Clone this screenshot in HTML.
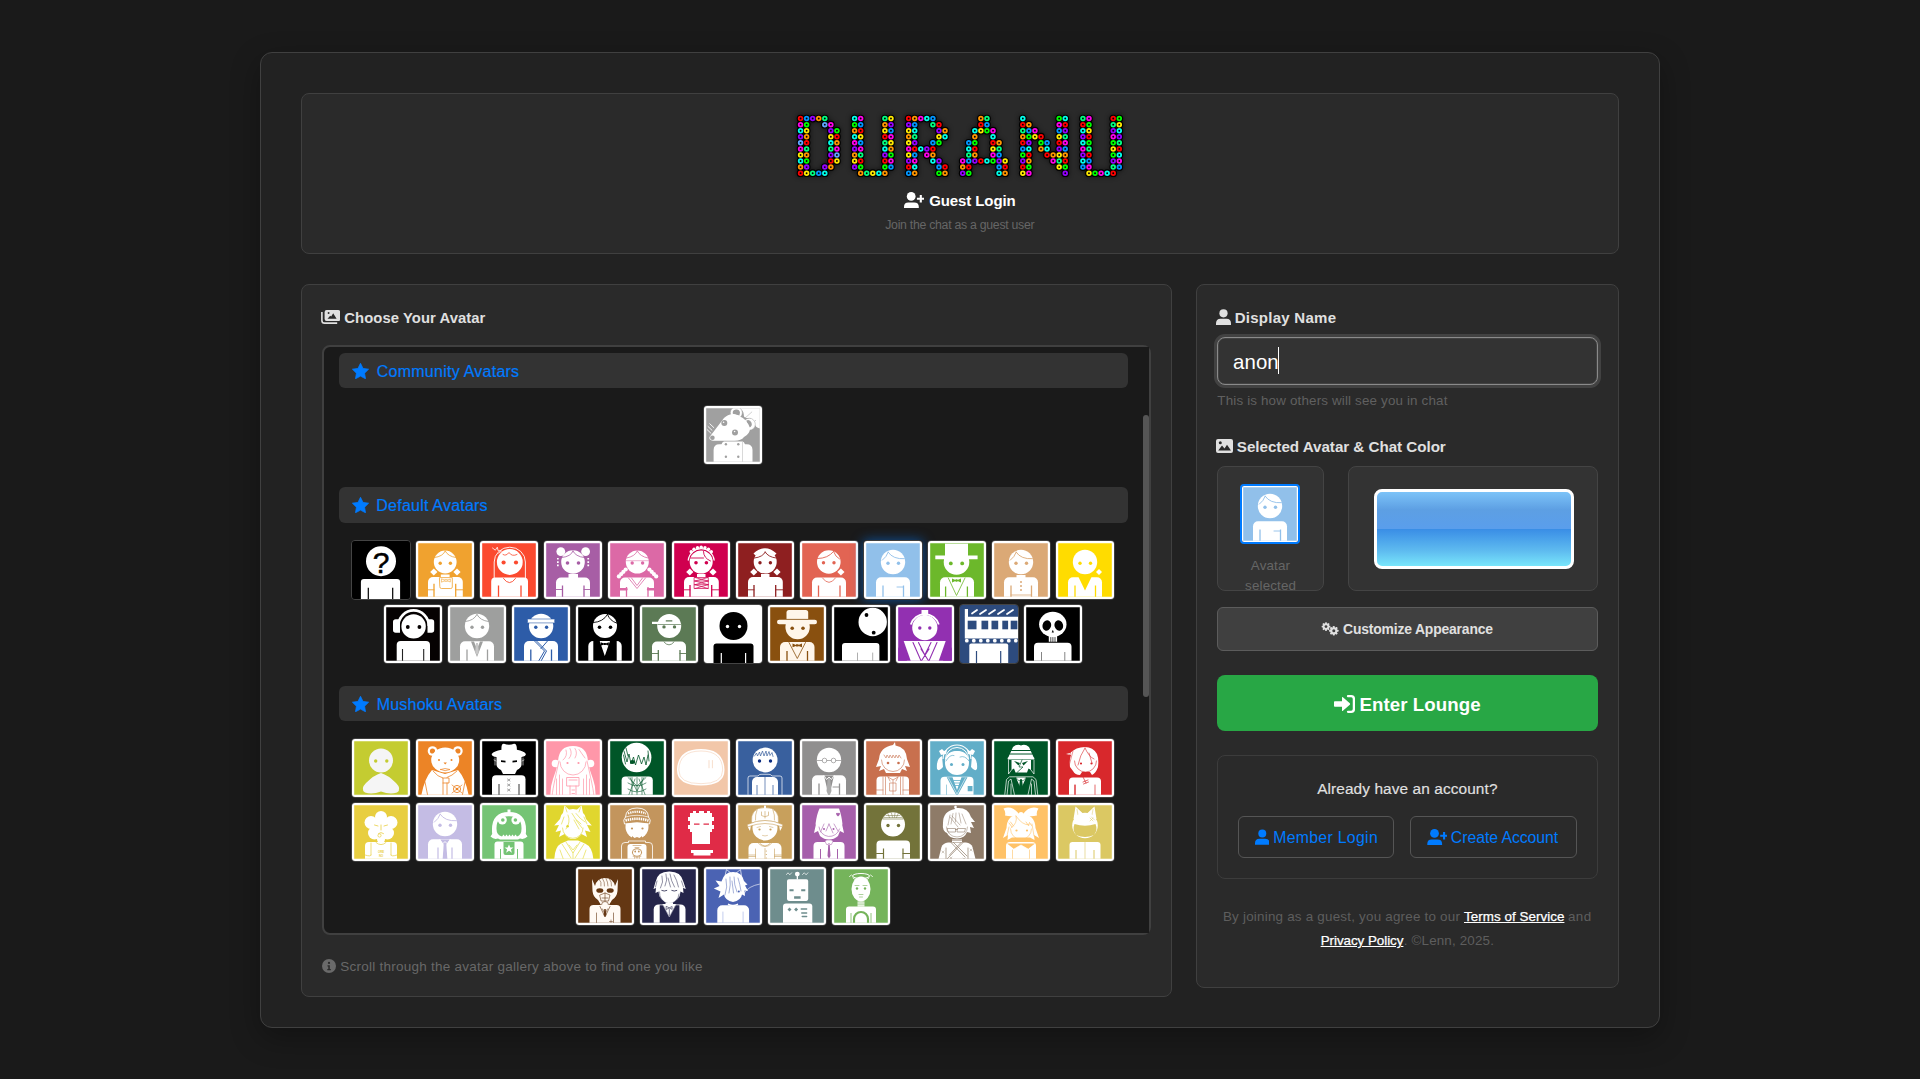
<!DOCTYPE html><html lang="en"><head><meta charset="utf-8"><title>Guest Login - Duranu</title><style>
*{box-sizing:border-box;margin:0;padding:0}
html,body{width:1920px;height:1079px;overflow:hidden;background:#1a1a1a}
body{font-family:"Liberation Sans",sans-serif;color:#e0e0e0;position:relative}
.abs{position:absolute}
button{all:unset;position:absolute;box-sizing:border-box;display:block}
#wrap{position:absolute;left:260px;top:52px;width:1400px;height:976px;background:#222;border:1px solid #404040;border-radius:12px;box-shadow:0 10px 30px rgba(0,0,0,.3)}
.card{position:absolute;background:#2a2a2a;border:1px solid #404040;border-radius:8px}
#hdr{left:301px;top:93px;width:1318px;height:161px}
#left{left:301px;top:284px;width:871px;height:713px}
#right{left:1196px;top:284px;width:423px;height:704px}
.ic{display:inline-block;vertical-align:middle}
.t{position:absolute;white-space:nowrap;line-height:1}
#gal{position:absolute;left:322px;top:345px;width:829px;height:590px;border:2px solid #404040;border-radius:8px;background:#1a1a1a;overflow:hidden}
.sec{position:absolute;left:15px;width:789px;height:35px;background:#333;border-radius:6px}
.av{position:absolute;width:60px;height:60px;border:1px solid #3e3e3e;border-radius:4px}
.av svg{display:block}
.av.dk{border-color:#444}
.av.sel{box-shadow:0 0 12px rgba(0,123,255,.55)}
</style></head><body>
<div id="wrap"></div>
<div class="card" id="hdr"></div>
<svg width="0" height="0" style="position:absolute"><defs><filter id="lg" x="-10%" y="-30%" width="120%" height="160%"><feGaussianBlur stdDeviation="2.4"/></filter><filter id="lg2" x="-10%" y="-30%" width="120%" height="160%"><feGaussianBlur stdDeviation="0.45"/></filter></defs></svg>
<div class="abs" style="left:790px;top:108px"><svg class="logo" role="img" aria-label="DURANU" width="339.85" height="75.75" viewBox="0 0 339.85 75.75"><title>DURANU</title><g fill="#000" opacity=".55" filter="url(#lg)"><circle cx="10.56" cy="10.56" r="3.9"/><circle cx="16.62" cy="10.56" r="3.9"/><circle cx="22.68" cy="10.56" r="3.9"/><circle cx="28.74" cy="10.56" r="3.9"/><circle cx="34.80" cy="10.56" r="3.9"/><circle cx="64.61" cy="10.56" r="3.9"/><circle cx="70.67" cy="10.56" r="3.9"/><circle cx="94.91" cy="10.56" r="3.9"/><circle cx="100.97" cy="10.56" r="3.9"/><circle cx="118.66" cy="10.56" r="3.9"/><circle cx="124.72" cy="10.56" r="3.9"/><circle cx="130.78" cy="10.56" r="3.9"/><circle cx="136.84" cy="10.56" r="3.9"/><circle cx="142.90" cy="10.56" r="3.9"/><circle cx="190.89" cy="10.56" r="3.9"/><circle cx="196.95" cy="10.56" r="3.9"/><circle cx="232.82" cy="10.56" r="3.9"/><circle cx="269.18" cy="10.56" r="3.9"/><circle cx="275.24" cy="10.56" r="3.9"/><circle cx="292.93" cy="10.56" r="3.9"/><circle cx="298.99" cy="10.56" r="3.9"/><circle cx="323.23" cy="10.56" r="3.9"/><circle cx="329.29" cy="10.56" r="3.9"/><circle cx="10.56" cy="16.63" r="3.9"/><circle cx="16.62" cy="16.63" r="3.9"/><circle cx="34.80" cy="16.63" r="3.9"/><circle cx="40.86" cy="16.63" r="3.9"/><circle cx="64.61" cy="16.63" r="3.9"/><circle cx="70.67" cy="16.63" r="3.9"/><circle cx="94.91" cy="16.63" r="3.9"/><circle cx="100.97" cy="16.63" r="3.9"/><circle cx="118.66" cy="16.63" r="3.9"/><circle cx="124.72" cy="16.63" r="3.9"/><circle cx="142.90" cy="16.63" r="3.9"/><circle cx="148.96" cy="16.63" r="3.9"/><circle cx="190.89" cy="16.63" r="3.9"/><circle cx="196.95" cy="16.63" r="3.9"/><circle cx="232.82" cy="16.63" r="3.9"/><circle cx="238.88" cy="16.63" r="3.9"/><circle cx="269.18" cy="16.63" r="3.9"/><circle cx="275.24" cy="16.63" r="3.9"/><circle cx="292.93" cy="16.63" r="3.9"/><circle cx="298.99" cy="16.63" r="3.9"/><circle cx="323.23" cy="16.63" r="3.9"/><circle cx="329.29" cy="16.63" r="3.9"/><circle cx="10.56" cy="22.70" r="3.9"/><circle cx="16.62" cy="22.70" r="3.9"/><circle cx="40.86" cy="22.70" r="3.9"/><circle cx="46.92" cy="22.70" r="3.9"/><circle cx="64.61" cy="22.70" r="3.9"/><circle cx="70.67" cy="22.70" r="3.9"/><circle cx="94.91" cy="22.70" r="3.9"/><circle cx="100.97" cy="22.70" r="3.9"/><circle cx="118.66" cy="22.70" r="3.9"/><circle cx="124.72" cy="22.70" r="3.9"/><circle cx="148.96" cy="22.70" r="3.9"/><circle cx="155.02" cy="22.70" r="3.9"/><circle cx="184.83" cy="22.70" r="3.9"/><circle cx="190.89" cy="22.70" r="3.9"/><circle cx="196.95" cy="22.70" r="3.9"/><circle cx="203.01" cy="22.70" r="3.9"/><circle cx="232.82" cy="22.70" r="3.9"/><circle cx="238.88" cy="22.70" r="3.9"/><circle cx="244.94" cy="22.70" r="3.9"/><circle cx="269.18" cy="22.70" r="3.9"/><circle cx="275.24" cy="22.70" r="3.9"/><circle cx="292.93" cy="22.70" r="3.9"/><circle cx="298.99" cy="22.70" r="3.9"/><circle cx="323.23" cy="22.70" r="3.9"/><circle cx="329.29" cy="22.70" r="3.9"/><circle cx="10.56" cy="28.77" r="3.9"/><circle cx="16.62" cy="28.77" r="3.9"/><circle cx="40.86" cy="28.77" r="3.9"/><circle cx="46.92" cy="28.77" r="3.9"/><circle cx="64.61" cy="28.77" r="3.9"/><circle cx="70.67" cy="28.77" r="3.9"/><circle cx="94.91" cy="28.77" r="3.9"/><circle cx="100.97" cy="28.77" r="3.9"/><circle cx="118.66" cy="28.77" r="3.9"/><circle cx="124.72" cy="28.77" r="3.9"/><circle cx="148.96" cy="28.77" r="3.9"/><circle cx="155.02" cy="28.77" r="3.9"/><circle cx="184.83" cy="28.77" r="3.9"/><circle cx="203.01" cy="28.77" r="3.9"/><circle cx="232.82" cy="28.77" r="3.9"/><circle cx="238.88" cy="28.77" r="3.9"/><circle cx="244.94" cy="28.77" r="3.9"/><circle cx="251.00" cy="28.77" r="3.9"/><circle cx="269.18" cy="28.77" r="3.9"/><circle cx="275.24" cy="28.77" r="3.9"/><circle cx="292.93" cy="28.77" r="3.9"/><circle cx="298.99" cy="28.77" r="3.9"/><circle cx="323.23" cy="28.77" r="3.9"/><circle cx="329.29" cy="28.77" r="3.9"/><circle cx="10.56" cy="34.84" r="3.9"/><circle cx="16.62" cy="34.84" r="3.9"/><circle cx="40.86" cy="34.84" r="3.9"/><circle cx="46.92" cy="34.84" r="3.9"/><circle cx="64.61" cy="34.84" r="3.9"/><circle cx="70.67" cy="34.84" r="3.9"/><circle cx="94.91" cy="34.84" r="3.9"/><circle cx="100.97" cy="34.84" r="3.9"/><circle cx="118.66" cy="34.84" r="3.9"/><circle cx="124.72" cy="34.84" r="3.9"/><circle cx="142.90" cy="34.84" r="3.9"/><circle cx="148.96" cy="34.84" r="3.9"/><circle cx="178.77" cy="34.84" r="3.9"/><circle cx="184.83" cy="34.84" r="3.9"/><circle cx="203.01" cy="34.84" r="3.9"/><circle cx="209.07" cy="34.84" r="3.9"/><circle cx="232.82" cy="34.84" r="3.9"/><circle cx="238.88" cy="34.84" r="3.9"/><circle cx="251.00" cy="34.84" r="3.9"/><circle cx="257.06" cy="34.84" r="3.9"/><circle cx="269.18" cy="34.84" r="3.9"/><circle cx="275.24" cy="34.84" r="3.9"/><circle cx="292.93" cy="34.84" r="3.9"/><circle cx="298.99" cy="34.84" r="3.9"/><circle cx="323.23" cy="34.84" r="3.9"/><circle cx="329.29" cy="34.84" r="3.9"/><circle cx="10.56" cy="40.91" r="3.9"/><circle cx="16.62" cy="40.91" r="3.9"/><circle cx="40.86" cy="40.91" r="3.9"/><circle cx="46.92" cy="40.91" r="3.9"/><circle cx="64.61" cy="40.91" r="3.9"/><circle cx="70.67" cy="40.91" r="3.9"/><circle cx="94.91" cy="40.91" r="3.9"/><circle cx="100.97" cy="40.91" r="3.9"/><circle cx="118.66" cy="40.91" r="3.9"/><circle cx="124.72" cy="40.91" r="3.9"/><circle cx="130.78" cy="40.91" r="3.9"/><circle cx="136.84" cy="40.91" r="3.9"/><circle cx="142.90" cy="40.91" r="3.9"/><circle cx="178.77" cy="40.91" r="3.9"/><circle cx="184.83" cy="40.91" r="3.9"/><circle cx="203.01" cy="40.91" r="3.9"/><circle cx="209.07" cy="40.91" r="3.9"/><circle cx="232.82" cy="40.91" r="3.9"/><circle cx="238.88" cy="40.91" r="3.9"/><circle cx="251.00" cy="40.91" r="3.9"/><circle cx="257.06" cy="40.91" r="3.9"/><circle cx="269.18" cy="40.91" r="3.9"/><circle cx="275.24" cy="40.91" r="3.9"/><circle cx="292.93" cy="40.91" r="3.9"/><circle cx="298.99" cy="40.91" r="3.9"/><circle cx="323.23" cy="40.91" r="3.9"/><circle cx="329.29" cy="40.91" r="3.9"/><circle cx="10.56" cy="46.98" r="3.9"/><circle cx="16.62" cy="46.98" r="3.9"/><circle cx="40.86" cy="46.98" r="3.9"/><circle cx="46.92" cy="46.98" r="3.9"/><circle cx="64.61" cy="46.98" r="3.9"/><circle cx="70.67" cy="46.98" r="3.9"/><circle cx="94.91" cy="46.98" r="3.9"/><circle cx="100.97" cy="46.98" r="3.9"/><circle cx="118.66" cy="46.98" r="3.9"/><circle cx="124.72" cy="46.98" r="3.9"/><circle cx="136.84" cy="46.98" r="3.9"/><circle cx="142.90" cy="46.98" r="3.9"/><circle cx="178.77" cy="46.98" r="3.9"/><circle cx="184.83" cy="46.98" r="3.9"/><circle cx="203.01" cy="46.98" r="3.9"/><circle cx="209.07" cy="46.98" r="3.9"/><circle cx="232.82" cy="46.98" r="3.9"/><circle cx="238.88" cy="46.98" r="3.9"/><circle cx="257.06" cy="46.98" r="3.9"/><circle cx="263.12" cy="46.98" r="3.9"/><circle cx="269.18" cy="46.98" r="3.9"/><circle cx="275.24" cy="46.98" r="3.9"/><circle cx="292.93" cy="46.98" r="3.9"/><circle cx="298.99" cy="46.98" r="3.9"/><circle cx="323.23" cy="46.98" r="3.9"/><circle cx="329.29" cy="46.98" r="3.9"/><circle cx="10.56" cy="53.05" r="3.9"/><circle cx="16.62" cy="53.05" r="3.9"/><circle cx="40.86" cy="53.05" r="3.9"/><circle cx="46.92" cy="53.05" r="3.9"/><circle cx="64.61" cy="53.05" r="3.9"/><circle cx="70.67" cy="53.05" r="3.9"/><circle cx="94.91" cy="53.05" r="3.9"/><circle cx="100.97" cy="53.05" r="3.9"/><circle cx="118.66" cy="53.05" r="3.9"/><circle cx="124.72" cy="53.05" r="3.9"/><circle cx="142.90" cy="53.05" r="3.9"/><circle cx="148.96" cy="53.05" r="3.9"/><circle cx="172.71" cy="53.05" r="3.9"/><circle cx="178.77" cy="53.05" r="3.9"/><circle cx="184.83" cy="53.05" r="3.9"/><circle cx="190.89" cy="53.05" r="3.9"/><circle cx="196.95" cy="53.05" r="3.9"/><circle cx="203.01" cy="53.05" r="3.9"/><circle cx="209.07" cy="53.05" r="3.9"/><circle cx="215.13" cy="53.05" r="3.9"/><circle cx="232.82" cy="53.05" r="3.9"/><circle cx="238.88" cy="53.05" r="3.9"/><circle cx="263.12" cy="53.05" r="3.9"/><circle cx="269.18" cy="53.05" r="3.9"/><circle cx="275.24" cy="53.05" r="3.9"/><circle cx="292.93" cy="53.05" r="3.9"/><circle cx="298.99" cy="53.05" r="3.9"/><circle cx="323.23" cy="53.05" r="3.9"/><circle cx="329.29" cy="53.05" r="3.9"/><circle cx="10.56" cy="59.12" r="3.9"/><circle cx="16.62" cy="59.12" r="3.9"/><circle cx="34.80" cy="59.12" r="3.9"/><circle cx="40.86" cy="59.12" r="3.9"/><circle cx="64.61" cy="59.12" r="3.9"/><circle cx="70.67" cy="59.12" r="3.9"/><circle cx="94.91" cy="59.12" r="3.9"/><circle cx="100.97" cy="59.12" r="3.9"/><circle cx="118.66" cy="59.12" r="3.9"/><circle cx="124.72" cy="59.12" r="3.9"/><circle cx="148.96" cy="59.12" r="3.9"/><circle cx="155.02" cy="59.12" r="3.9"/><circle cx="172.71" cy="59.12" r="3.9"/><circle cx="178.77" cy="59.12" r="3.9"/><circle cx="209.07" cy="59.12" r="3.9"/><circle cx="215.13" cy="59.12" r="3.9"/><circle cx="232.82" cy="59.12" r="3.9"/><circle cx="238.88" cy="59.12" r="3.9"/><circle cx="269.18" cy="59.12" r="3.9"/><circle cx="275.24" cy="59.12" r="3.9"/><circle cx="292.93" cy="59.12" r="3.9"/><circle cx="298.99" cy="59.12" r="3.9"/><circle cx="323.23" cy="59.12" r="3.9"/><circle cx="329.29" cy="59.12" r="3.9"/><circle cx="10.56" cy="65.19" r="3.9"/><circle cx="16.62" cy="65.19" r="3.9"/><circle cx="22.68" cy="65.19" r="3.9"/><circle cx="28.74" cy="65.19" r="3.9"/><circle cx="34.80" cy="65.19" r="3.9"/><circle cx="70.67" cy="65.19" r="3.9"/><circle cx="76.73" cy="65.19" r="3.9"/><circle cx="82.79" cy="65.19" r="3.9"/><circle cx="88.85" cy="65.19" r="3.9"/><circle cx="94.91" cy="65.19" r="3.9"/><circle cx="118.66" cy="65.19" r="3.9"/><circle cx="124.72" cy="65.19" r="3.9"/><circle cx="148.96" cy="65.19" r="3.9"/><circle cx="155.02" cy="65.19" r="3.9"/><circle cx="172.71" cy="65.19" r="3.9"/><circle cx="178.77" cy="65.19" r="3.9"/><circle cx="209.07" cy="65.19" r="3.9"/><circle cx="215.13" cy="65.19" r="3.9"/><circle cx="232.82" cy="65.19" r="3.9"/><circle cx="238.88" cy="65.19" r="3.9"/><circle cx="275.24" cy="65.19" r="3.9"/><circle cx="298.99" cy="65.19" r="3.9"/><circle cx="305.05" cy="65.19" r="3.9"/><circle cx="311.11" cy="65.19" r="3.9"/><circle cx="317.17" cy="65.19" r="3.9"/><circle cx="323.23" cy="65.19" r="3.9"/></g><g fill="#000" filter="url(#lg2)"><circle cx="10.56" cy="10.56" r="3.9"/><circle cx="16.62" cy="10.56" r="3.9"/><circle cx="22.68" cy="10.56" r="3.9"/><circle cx="28.74" cy="10.56" r="3.9"/><circle cx="34.80" cy="10.56" r="3.9"/><circle cx="64.61" cy="10.56" r="3.9"/><circle cx="70.67" cy="10.56" r="3.9"/><circle cx="94.91" cy="10.56" r="3.9"/><circle cx="100.97" cy="10.56" r="3.9"/><circle cx="118.66" cy="10.56" r="3.9"/><circle cx="124.72" cy="10.56" r="3.9"/><circle cx="130.78" cy="10.56" r="3.9"/><circle cx="136.84" cy="10.56" r="3.9"/><circle cx="142.90" cy="10.56" r="3.9"/><circle cx="190.89" cy="10.56" r="3.9"/><circle cx="196.95" cy="10.56" r="3.9"/><circle cx="232.82" cy="10.56" r="3.9"/><circle cx="269.18" cy="10.56" r="3.9"/><circle cx="275.24" cy="10.56" r="3.9"/><circle cx="292.93" cy="10.56" r="3.9"/><circle cx="298.99" cy="10.56" r="3.9"/><circle cx="323.23" cy="10.56" r="3.9"/><circle cx="329.29" cy="10.56" r="3.9"/><circle cx="10.56" cy="16.63" r="3.9"/><circle cx="16.62" cy="16.63" r="3.9"/><circle cx="34.80" cy="16.63" r="3.9"/><circle cx="40.86" cy="16.63" r="3.9"/><circle cx="64.61" cy="16.63" r="3.9"/><circle cx="70.67" cy="16.63" r="3.9"/><circle cx="94.91" cy="16.63" r="3.9"/><circle cx="100.97" cy="16.63" r="3.9"/><circle cx="118.66" cy="16.63" r="3.9"/><circle cx="124.72" cy="16.63" r="3.9"/><circle cx="142.90" cy="16.63" r="3.9"/><circle cx="148.96" cy="16.63" r="3.9"/><circle cx="190.89" cy="16.63" r="3.9"/><circle cx="196.95" cy="16.63" r="3.9"/><circle cx="232.82" cy="16.63" r="3.9"/><circle cx="238.88" cy="16.63" r="3.9"/><circle cx="269.18" cy="16.63" r="3.9"/><circle cx="275.24" cy="16.63" r="3.9"/><circle cx="292.93" cy="16.63" r="3.9"/><circle cx="298.99" cy="16.63" r="3.9"/><circle cx="323.23" cy="16.63" r="3.9"/><circle cx="329.29" cy="16.63" r="3.9"/><circle cx="10.56" cy="22.70" r="3.9"/><circle cx="16.62" cy="22.70" r="3.9"/><circle cx="40.86" cy="22.70" r="3.9"/><circle cx="46.92" cy="22.70" r="3.9"/><circle cx="64.61" cy="22.70" r="3.9"/><circle cx="70.67" cy="22.70" r="3.9"/><circle cx="94.91" cy="22.70" r="3.9"/><circle cx="100.97" cy="22.70" r="3.9"/><circle cx="118.66" cy="22.70" r="3.9"/><circle cx="124.72" cy="22.70" r="3.9"/><circle cx="148.96" cy="22.70" r="3.9"/><circle cx="155.02" cy="22.70" r="3.9"/><circle cx="184.83" cy="22.70" r="3.9"/><circle cx="190.89" cy="22.70" r="3.9"/><circle cx="196.95" cy="22.70" r="3.9"/><circle cx="203.01" cy="22.70" r="3.9"/><circle cx="232.82" cy="22.70" r="3.9"/><circle cx="238.88" cy="22.70" r="3.9"/><circle cx="244.94" cy="22.70" r="3.9"/><circle cx="269.18" cy="22.70" r="3.9"/><circle cx="275.24" cy="22.70" r="3.9"/><circle cx="292.93" cy="22.70" r="3.9"/><circle cx="298.99" cy="22.70" r="3.9"/><circle cx="323.23" cy="22.70" r="3.9"/><circle cx="329.29" cy="22.70" r="3.9"/><circle cx="10.56" cy="28.77" r="3.9"/><circle cx="16.62" cy="28.77" r="3.9"/><circle cx="40.86" cy="28.77" r="3.9"/><circle cx="46.92" cy="28.77" r="3.9"/><circle cx="64.61" cy="28.77" r="3.9"/><circle cx="70.67" cy="28.77" r="3.9"/><circle cx="94.91" cy="28.77" r="3.9"/><circle cx="100.97" cy="28.77" r="3.9"/><circle cx="118.66" cy="28.77" r="3.9"/><circle cx="124.72" cy="28.77" r="3.9"/><circle cx="148.96" cy="28.77" r="3.9"/><circle cx="155.02" cy="28.77" r="3.9"/><circle cx="184.83" cy="28.77" r="3.9"/><circle cx="203.01" cy="28.77" r="3.9"/><circle cx="232.82" cy="28.77" r="3.9"/><circle cx="238.88" cy="28.77" r="3.9"/><circle cx="244.94" cy="28.77" r="3.9"/><circle cx="251.00" cy="28.77" r="3.9"/><circle cx="269.18" cy="28.77" r="3.9"/><circle cx="275.24" cy="28.77" r="3.9"/><circle cx="292.93" cy="28.77" r="3.9"/><circle cx="298.99" cy="28.77" r="3.9"/><circle cx="323.23" cy="28.77" r="3.9"/><circle cx="329.29" cy="28.77" r="3.9"/><circle cx="10.56" cy="34.84" r="3.9"/><circle cx="16.62" cy="34.84" r="3.9"/><circle cx="40.86" cy="34.84" r="3.9"/><circle cx="46.92" cy="34.84" r="3.9"/><circle cx="64.61" cy="34.84" r="3.9"/><circle cx="70.67" cy="34.84" r="3.9"/><circle cx="94.91" cy="34.84" r="3.9"/><circle cx="100.97" cy="34.84" r="3.9"/><circle cx="118.66" cy="34.84" r="3.9"/><circle cx="124.72" cy="34.84" r="3.9"/><circle cx="142.90" cy="34.84" r="3.9"/><circle cx="148.96" cy="34.84" r="3.9"/><circle cx="178.77" cy="34.84" r="3.9"/><circle cx="184.83" cy="34.84" r="3.9"/><circle cx="203.01" cy="34.84" r="3.9"/><circle cx="209.07" cy="34.84" r="3.9"/><circle cx="232.82" cy="34.84" r="3.9"/><circle cx="238.88" cy="34.84" r="3.9"/><circle cx="251.00" cy="34.84" r="3.9"/><circle cx="257.06" cy="34.84" r="3.9"/><circle cx="269.18" cy="34.84" r="3.9"/><circle cx="275.24" cy="34.84" r="3.9"/><circle cx="292.93" cy="34.84" r="3.9"/><circle cx="298.99" cy="34.84" r="3.9"/><circle cx="323.23" cy="34.84" r="3.9"/><circle cx="329.29" cy="34.84" r="3.9"/><circle cx="10.56" cy="40.91" r="3.9"/><circle cx="16.62" cy="40.91" r="3.9"/><circle cx="40.86" cy="40.91" r="3.9"/><circle cx="46.92" cy="40.91" r="3.9"/><circle cx="64.61" cy="40.91" r="3.9"/><circle cx="70.67" cy="40.91" r="3.9"/><circle cx="94.91" cy="40.91" r="3.9"/><circle cx="100.97" cy="40.91" r="3.9"/><circle cx="118.66" cy="40.91" r="3.9"/><circle cx="124.72" cy="40.91" r="3.9"/><circle cx="130.78" cy="40.91" r="3.9"/><circle cx="136.84" cy="40.91" r="3.9"/><circle cx="142.90" cy="40.91" r="3.9"/><circle cx="178.77" cy="40.91" r="3.9"/><circle cx="184.83" cy="40.91" r="3.9"/><circle cx="203.01" cy="40.91" r="3.9"/><circle cx="209.07" cy="40.91" r="3.9"/><circle cx="232.82" cy="40.91" r="3.9"/><circle cx="238.88" cy="40.91" r="3.9"/><circle cx="251.00" cy="40.91" r="3.9"/><circle cx="257.06" cy="40.91" r="3.9"/><circle cx="269.18" cy="40.91" r="3.9"/><circle cx="275.24" cy="40.91" r="3.9"/><circle cx="292.93" cy="40.91" r="3.9"/><circle cx="298.99" cy="40.91" r="3.9"/><circle cx="323.23" cy="40.91" r="3.9"/><circle cx="329.29" cy="40.91" r="3.9"/><circle cx="10.56" cy="46.98" r="3.9"/><circle cx="16.62" cy="46.98" r="3.9"/><circle cx="40.86" cy="46.98" r="3.9"/><circle cx="46.92" cy="46.98" r="3.9"/><circle cx="64.61" cy="46.98" r="3.9"/><circle cx="70.67" cy="46.98" r="3.9"/><circle cx="94.91" cy="46.98" r="3.9"/><circle cx="100.97" cy="46.98" r="3.9"/><circle cx="118.66" cy="46.98" r="3.9"/><circle cx="124.72" cy="46.98" r="3.9"/><circle cx="136.84" cy="46.98" r="3.9"/><circle cx="142.90" cy="46.98" r="3.9"/><circle cx="178.77" cy="46.98" r="3.9"/><circle cx="184.83" cy="46.98" r="3.9"/><circle cx="203.01" cy="46.98" r="3.9"/><circle cx="209.07" cy="46.98" r="3.9"/><circle cx="232.82" cy="46.98" r="3.9"/><circle cx="238.88" cy="46.98" r="3.9"/><circle cx="257.06" cy="46.98" r="3.9"/><circle cx="263.12" cy="46.98" r="3.9"/><circle cx="269.18" cy="46.98" r="3.9"/><circle cx="275.24" cy="46.98" r="3.9"/><circle cx="292.93" cy="46.98" r="3.9"/><circle cx="298.99" cy="46.98" r="3.9"/><circle cx="323.23" cy="46.98" r="3.9"/><circle cx="329.29" cy="46.98" r="3.9"/><circle cx="10.56" cy="53.05" r="3.9"/><circle cx="16.62" cy="53.05" r="3.9"/><circle cx="40.86" cy="53.05" r="3.9"/><circle cx="46.92" cy="53.05" r="3.9"/><circle cx="64.61" cy="53.05" r="3.9"/><circle cx="70.67" cy="53.05" r="3.9"/><circle cx="94.91" cy="53.05" r="3.9"/><circle cx="100.97" cy="53.05" r="3.9"/><circle cx="118.66" cy="53.05" r="3.9"/><circle cx="124.72" cy="53.05" r="3.9"/><circle cx="142.90" cy="53.05" r="3.9"/><circle cx="148.96" cy="53.05" r="3.9"/><circle cx="172.71" cy="53.05" r="3.9"/><circle cx="178.77" cy="53.05" r="3.9"/><circle cx="184.83" cy="53.05" r="3.9"/><circle cx="190.89" cy="53.05" r="3.9"/><circle cx="196.95" cy="53.05" r="3.9"/><circle cx="203.01" cy="53.05" r="3.9"/><circle cx="209.07" cy="53.05" r="3.9"/><circle cx="215.13" cy="53.05" r="3.9"/><circle cx="232.82" cy="53.05" r="3.9"/><circle cx="238.88" cy="53.05" r="3.9"/><circle cx="263.12" cy="53.05" r="3.9"/><circle cx="269.18" cy="53.05" r="3.9"/><circle cx="275.24" cy="53.05" r="3.9"/><circle cx="292.93" cy="53.05" r="3.9"/><circle cx="298.99" cy="53.05" r="3.9"/><circle cx="323.23" cy="53.05" r="3.9"/><circle cx="329.29" cy="53.05" r="3.9"/><circle cx="10.56" cy="59.12" r="3.9"/><circle cx="16.62" cy="59.12" r="3.9"/><circle cx="34.80" cy="59.12" r="3.9"/><circle cx="40.86" cy="59.12" r="3.9"/><circle cx="64.61" cy="59.12" r="3.9"/><circle cx="70.67" cy="59.12" r="3.9"/><circle cx="94.91" cy="59.12" r="3.9"/><circle cx="100.97" cy="59.12" r="3.9"/><circle cx="118.66" cy="59.12" r="3.9"/><circle cx="124.72" cy="59.12" r="3.9"/><circle cx="148.96" cy="59.12" r="3.9"/><circle cx="155.02" cy="59.12" r="3.9"/><circle cx="172.71" cy="59.12" r="3.9"/><circle cx="178.77" cy="59.12" r="3.9"/><circle cx="209.07" cy="59.12" r="3.9"/><circle cx="215.13" cy="59.12" r="3.9"/><circle cx="232.82" cy="59.12" r="3.9"/><circle cx="238.88" cy="59.12" r="3.9"/><circle cx="269.18" cy="59.12" r="3.9"/><circle cx="275.24" cy="59.12" r="3.9"/><circle cx="292.93" cy="59.12" r="3.9"/><circle cx="298.99" cy="59.12" r="3.9"/><circle cx="323.23" cy="59.12" r="3.9"/><circle cx="329.29" cy="59.12" r="3.9"/><circle cx="10.56" cy="65.19" r="3.9"/><circle cx="16.62" cy="65.19" r="3.9"/><circle cx="22.68" cy="65.19" r="3.9"/><circle cx="28.74" cy="65.19" r="3.9"/><circle cx="34.80" cy="65.19" r="3.9"/><circle cx="70.67" cy="65.19" r="3.9"/><circle cx="76.73" cy="65.19" r="3.9"/><circle cx="82.79" cy="65.19" r="3.9"/><circle cx="88.85" cy="65.19" r="3.9"/><circle cx="94.91" cy="65.19" r="3.9"/><circle cx="118.66" cy="65.19" r="3.9"/><circle cx="124.72" cy="65.19" r="3.9"/><circle cx="148.96" cy="65.19" r="3.9"/><circle cx="155.02" cy="65.19" r="3.9"/><circle cx="172.71" cy="65.19" r="3.9"/><circle cx="178.77" cy="65.19" r="3.9"/><circle cx="209.07" cy="65.19" r="3.9"/><circle cx="215.13" cy="65.19" r="3.9"/><circle cx="232.82" cy="65.19" r="3.9"/><circle cx="238.88" cy="65.19" r="3.9"/><circle cx="275.24" cy="65.19" r="3.9"/><circle cx="298.99" cy="65.19" r="3.9"/><circle cx="305.05" cy="65.19" r="3.9"/><circle cx="311.11" cy="65.19" r="3.9"/><circle cx="317.17" cy="65.19" r="3.9"/><circle cx="323.23" cy="65.19" r="3.9"/></g><g fill="none" stroke-width="1.8"><g stroke="#ff0000"><circle cx="10.56" cy="10.56" r="1.85"/><circle cx="118.66" cy="10.56" r="1.85"/><circle cx="323.23" cy="10.56" r="1.85"/><circle cx="148.96" cy="16.63" r="1.85"/><circle cx="190.89" cy="16.63" r="1.85"/><circle cx="232.82" cy="16.63" r="1.85"/><circle cx="275.24" cy="16.63" r="1.85"/><circle cx="292.93" cy="16.63" r="1.85"/><circle cx="70.67" cy="22.70" r="1.85"/><circle cx="46.92" cy="28.77" r="1.85"/><circle cx="94.91" cy="28.77" r="1.85"/><circle cx="251.00" cy="28.77" r="1.85"/><circle cx="298.99" cy="28.77" r="1.85"/><circle cx="16.62" cy="34.84" r="1.85"/><circle cx="203.01" cy="34.84" r="1.85"/><circle cx="232.82" cy="34.84" r="1.85"/><circle cx="269.18" cy="34.84" r="1.85"/><circle cx="124.72" cy="40.91" r="1.85"/><circle cx="142.90" cy="40.91" r="1.85"/><circle cx="184.83" cy="40.91" r="1.85"/><circle cx="329.29" cy="40.91" r="1.85"/><circle cx="238.88" cy="46.98" r="1.85"/><circle cx="257.06" cy="46.98" r="1.85"/><circle cx="298.99" cy="46.98" r="1.85"/><circle cx="40.86" cy="53.05" r="1.85"/><circle cx="70.67" cy="53.05" r="1.85"/><circle cx="94.91" cy="53.05" r="1.85"/><circle cx="190.89" cy="53.05" r="1.85"/><circle cx="275.24" cy="53.05" r="1.85"/><circle cx="118.66" cy="59.12" r="1.85"/><circle cx="155.02" cy="59.12" r="1.85"/><circle cx="178.77" cy="59.12" r="1.85"/><circle cx="215.13" cy="59.12" r="1.85"/><circle cx="232.82" cy="59.12" r="1.85"/><circle cx="10.56" cy="65.19" r="1.85"/><circle cx="323.23" cy="65.19" r="1.85"/></g><g stroke="#0095ff"><circle cx="16.62" cy="10.56" r="1.85"/><circle cx="142.90" cy="10.56" r="1.85"/><circle cx="70.67" cy="16.63" r="1.85"/><circle cx="124.72" cy="16.63" r="1.85"/><circle cx="196.95" cy="16.63" r="1.85"/><circle cx="100.97" cy="22.70" r="1.85"/><circle cx="238.88" cy="22.70" r="1.85"/><circle cx="269.18" cy="22.70" r="1.85"/><circle cx="70.67" cy="34.84" r="1.85"/><circle cx="142.90" cy="34.84" r="1.85"/><circle cx="178.77" cy="34.84" r="1.85"/><circle cx="257.06" cy="34.84" r="1.85"/><circle cx="232.82" cy="40.91" r="1.85"/><circle cx="275.24" cy="40.91" r="1.85"/><circle cx="124.72" cy="46.98" r="1.85"/><circle cx="209.07" cy="46.98" r="1.85"/><circle cx="178.77" cy="53.05" r="1.85"/><circle cx="298.99" cy="53.05" r="1.85"/><circle cx="100.97" cy="59.12" r="1.85"/><circle cx="148.96" cy="59.12" r="1.85"/><circle cx="209.07" cy="59.12" r="1.85"/><circle cx="292.93" cy="59.12" r="1.85"/><circle cx="329.29" cy="59.12" r="1.85"/><circle cx="28.74" cy="65.19" r="1.85"/><circle cx="118.66" cy="65.19" r="1.85"/></g><g stroke="#9500ff"><circle cx="22.68" cy="10.56" r="1.85"/><circle cx="100.97" cy="16.63" r="1.85"/><circle cx="118.66" cy="16.63" r="1.85"/><circle cx="40.86" cy="22.70" r="1.85"/><circle cx="148.96" cy="22.70" r="1.85"/><circle cx="275.24" cy="22.70" r="1.85"/><circle cx="323.23" cy="22.70" r="1.85"/><circle cx="10.56" cy="28.77" r="1.85"/><circle cx="292.93" cy="28.77" r="1.85"/><circle cx="329.29" cy="28.77" r="1.85"/><circle cx="124.72" cy="34.84" r="1.85"/><circle cx="238.88" cy="34.84" r="1.85"/><circle cx="64.61" cy="40.91" r="1.85"/><circle cx="136.84" cy="40.91" r="1.85"/><circle cx="269.18" cy="40.91" r="1.85"/><circle cx="40.86" cy="46.98" r="1.85"/><circle cx="94.91" cy="46.98" r="1.85"/><circle cx="292.93" cy="46.98" r="1.85"/><circle cx="118.66" cy="53.05" r="1.85"/><circle cx="148.96" cy="53.05" r="1.85"/><circle cx="184.83" cy="53.05" r="1.85"/><circle cx="209.07" cy="53.05" r="1.85"/><circle cx="232.82" cy="53.05" r="1.85"/><circle cx="323.23" cy="53.05" r="1.85"/><circle cx="16.62" cy="59.12" r="1.85"/><circle cx="34.80" cy="59.12" r="1.85"/><circle cx="64.61" cy="59.12" r="1.85"/><circle cx="172.71" cy="65.19" r="1.85"/><circle cx="275.24" cy="65.19" r="1.85"/></g><g stroke="#ff9500"><circle cx="28.74" cy="10.56" r="1.85"/><circle cx="124.72" cy="10.56" r="1.85"/><circle cx="190.89" cy="10.56" r="1.85"/><circle cx="94.91" cy="16.63" r="1.85"/><circle cx="238.88" cy="16.63" r="1.85"/><circle cx="64.61" cy="22.70" r="1.85"/><circle cx="155.02" cy="22.70" r="1.85"/><circle cx="16.62" cy="28.77" r="1.85"/><circle cx="118.66" cy="28.77" r="1.85"/><circle cx="184.83" cy="28.77" r="1.85"/><circle cx="232.82" cy="28.77" r="1.85"/><circle cx="46.92" cy="34.84" r="1.85"/><circle cx="209.07" cy="34.84" r="1.85"/><circle cx="100.97" cy="40.91" r="1.85"/><circle cx="251.00" cy="40.91" r="1.85"/><circle cx="16.62" cy="46.98" r="1.85"/><circle cx="64.61" cy="46.98" r="1.85"/><circle cx="142.90" cy="46.98" r="1.85"/><circle cx="184.83" cy="46.98" r="1.85"/><circle cx="263.12" cy="46.98" r="1.85"/><circle cx="275.24" cy="46.98" r="1.85"/><circle cx="238.88" cy="53.05" r="1.85"/><circle cx="10.56" cy="59.12" r="1.85"/><circle cx="40.86" cy="59.12" r="1.85"/><circle cx="172.71" cy="59.12" r="1.85"/><circle cx="70.67" cy="65.19" r="1.85"/><circle cx="94.91" cy="65.19" r="1.85"/><circle cx="124.72" cy="65.19" r="1.85"/><circle cx="155.02" cy="65.19" r="1.85"/><circle cx="215.13" cy="65.19" r="1.85"/></g><g stroke="#00ff80"><circle cx="34.80" cy="10.56" r="1.85"/><circle cx="94.91" cy="10.56" r="1.85"/><circle cx="196.95" cy="10.56" r="1.85"/><circle cx="292.93" cy="10.56" r="1.85"/><circle cx="142.90" cy="16.63" r="1.85"/><circle cx="323.23" cy="16.63" r="1.85"/><circle cx="232.82" cy="22.70" r="1.85"/><circle cx="124.72" cy="28.77" r="1.85"/><circle cx="275.24" cy="28.77" r="1.85"/><circle cx="94.91" cy="34.84" r="1.85"/><circle cx="329.29" cy="34.84" r="1.85"/><circle cx="16.62" cy="40.91" r="1.85"/><circle cx="40.86" cy="40.91" r="1.85"/><circle cx="209.07" cy="40.91" r="1.85"/><circle cx="298.99" cy="40.91" r="1.85"/><circle cx="70.67" cy="46.98" r="1.85"/><circle cx="178.77" cy="46.98" r="1.85"/><circle cx="269.18" cy="53.05" r="1.85"/><circle cx="323.23" cy="59.12" r="1.85"/><circle cx="22.68" cy="65.19" r="1.85"/><circle cx="76.73" cy="65.19" r="1.85"/></g><g stroke="#00ffea"><circle cx="64.61" cy="10.56" r="1.85"/><circle cx="136.84" cy="10.56" r="1.85"/><circle cx="232.82" cy="10.56" r="1.85"/><circle cx="275.24" cy="10.56" r="1.85"/><circle cx="10.56" cy="22.70" r="1.85"/><circle cx="124.72" cy="22.70" r="1.85"/><circle cx="184.83" cy="22.70" r="1.85"/><circle cx="292.93" cy="22.70" r="1.85"/><circle cx="329.29" cy="22.70" r="1.85"/><circle cx="64.61" cy="28.77" r="1.85"/><circle cx="155.02" cy="28.77" r="1.85"/><circle cx="203.01" cy="28.77" r="1.85"/><circle cx="40.86" cy="34.84" r="1.85"/><circle cx="292.93" cy="34.84" r="1.85"/><circle cx="94.91" cy="40.91" r="1.85"/><circle cx="130.78" cy="40.91" r="1.85"/><circle cx="178.77" cy="40.91" r="1.85"/><circle cx="238.88" cy="40.91" r="1.85"/><circle cx="257.06" cy="40.91" r="1.85"/><circle cx="329.29" cy="46.98" r="1.85"/><circle cx="10.56" cy="53.05" r="1.85"/><circle cx="142.90" cy="53.05" r="1.85"/><circle cx="196.95" cy="53.05" r="1.85"/><circle cx="292.93" cy="53.05" r="1.85"/><circle cx="124.72" cy="59.12" r="1.85"/><circle cx="34.80" cy="65.19" r="1.85"/><circle cx="88.85" cy="65.19" r="1.85"/><circle cx="209.07" cy="65.19" r="1.85"/><circle cx="317.17" cy="65.19" r="1.85"/></g><g stroke="#ff00ea"><circle cx="70.67" cy="10.56" r="1.85"/><circle cx="130.78" cy="10.56" r="1.85"/><circle cx="298.99" cy="10.56" r="1.85"/><circle cx="10.56" cy="16.63" r="1.85"/><circle cx="40.86" cy="16.63" r="1.85"/><circle cx="269.18" cy="16.63" r="1.85"/><circle cx="203.01" cy="22.70" r="1.85"/><circle cx="244.94" cy="22.70" r="1.85"/><circle cx="100.97" cy="28.77" r="1.85"/><circle cx="323.23" cy="28.77" r="1.85"/><circle cx="64.61" cy="34.84" r="1.85"/><circle cx="275.24" cy="34.84" r="1.85"/><circle cx="10.56" cy="40.91" r="1.85"/><circle cx="46.92" cy="40.91" r="1.85"/><circle cx="70.67" cy="40.91" r="1.85"/><circle cx="118.66" cy="40.91" r="1.85"/><circle cx="292.93" cy="40.91" r="1.85"/><circle cx="136.84" cy="46.98" r="1.85"/><circle cx="203.01" cy="46.98" r="1.85"/><circle cx="100.97" cy="53.05" r="1.85"/><circle cx="124.72" cy="53.05" r="1.85"/><circle cx="172.71" cy="53.05" r="1.85"/><circle cx="263.12" cy="53.05" r="1.85"/><circle cx="329.29" cy="53.05" r="1.85"/><circle cx="298.99" cy="59.12" r="1.85"/><circle cx="238.88" cy="65.19" r="1.85"/><circle cx="311.11" cy="65.19" r="1.85"/></g><g stroke="#ffea00"><circle cx="100.97" cy="10.56" r="1.85"/><circle cx="329.29" cy="16.63" r="1.85"/><circle cx="16.62" cy="22.70" r="1.85"/><circle cx="94.91" cy="22.70" r="1.85"/><circle cx="118.66" cy="22.70" r="1.85"/><circle cx="190.89" cy="22.70" r="1.85"/><circle cx="298.99" cy="22.70" r="1.85"/><circle cx="40.86" cy="28.77" r="1.85"/><circle cx="70.67" cy="28.77" r="1.85"/><circle cx="148.96" cy="28.77" r="1.85"/><circle cx="244.94" cy="28.77" r="1.85"/><circle cx="269.18" cy="28.77" r="1.85"/><circle cx="100.97" cy="34.84" r="1.85"/><circle cx="118.66" cy="34.84" r="1.85"/><circle cx="203.01" cy="40.91" r="1.85"/><circle cx="323.23" cy="40.91" r="1.85"/><circle cx="10.56" cy="46.98" r="1.85"/><circle cx="118.66" cy="46.98" r="1.85"/><circle cx="269.18" cy="46.98" r="1.85"/><circle cx="46.92" cy="53.05" r="1.85"/><circle cx="64.61" cy="53.05" r="1.85"/><circle cx="215.13" cy="53.05" r="1.85"/><circle cx="269.18" cy="59.12" r="1.85"/><circle cx="16.62" cy="65.19" r="1.85"/><circle cx="82.79" cy="65.19" r="1.85"/><circle cx="232.82" cy="65.19" r="1.85"/><circle cx="298.99" cy="65.19" r="1.85"/></g><g stroke="#00ff00"><circle cx="269.18" cy="10.56" r="1.85"/><circle cx="329.29" cy="10.56" r="1.85"/><circle cx="16.62" cy="16.63" r="1.85"/><circle cx="64.61" cy="16.63" r="1.85"/><circle cx="298.99" cy="16.63" r="1.85"/><circle cx="46.92" cy="22.70" r="1.85"/><circle cx="196.95" cy="22.70" r="1.85"/><circle cx="238.88" cy="28.77" r="1.85"/><circle cx="148.96" cy="34.84" r="1.85"/><circle cx="184.83" cy="34.84" r="1.85"/><circle cx="251.00" cy="34.84" r="1.85"/><circle cx="298.99" cy="34.84" r="1.85"/><circle cx="323.23" cy="34.84" r="1.85"/><circle cx="100.97" cy="46.98" r="1.85"/><circle cx="232.82" cy="46.98" r="1.85"/><circle cx="323.23" cy="46.98" r="1.85"/><circle cx="16.62" cy="53.05" r="1.85"/><circle cx="203.01" cy="53.05" r="1.85"/><circle cx="70.67" cy="59.12" r="1.85"/><circle cx="94.91" cy="59.12" r="1.85"/><circle cx="238.88" cy="59.12" r="1.85"/><circle cx="275.24" cy="59.12" r="1.85"/><circle cx="148.96" cy="65.19" r="1.85"/><circle cx="178.77" cy="65.19" r="1.85"/><circle cx="305.05" cy="65.19" r="1.85"/></g><g stroke="#5ea5ff"><circle cx="34.80" cy="16.63" r="1.85"/><circle cx="10.56" cy="34.84" r="1.85"/><circle cx="46.92" cy="46.98" r="1.85"/></g></g></svg></div>
<div class="abs" style="left:904px;top:192px;line-height:0"><svg class="ic" width="20" height="16" viewBox="0 0 20 16"><circle cx="7.2" cy="4.4" r="4.4" fill="#fff"/><path d="M0 16v-1.2Q0 10.400 4.400 10.400h5.800Q14.800 10.400 14.800 14.800V16z" fill="#fff"/><path d="M16.800 2.900v7.600M12.900 6.700h7.800" stroke="#fff" stroke-width="2.100" fill="none"/></svg></div><div class="t" id="t_guest" style="left:929.13px;top:193px;font-size:15px;color:#fff;letter-spacing:-0.090px;font-weight:bold">Guest Login</div>
<div class="t" id="t_join" style="left:885.21px;top:219px;font-size:12.3px;color:#666;letter-spacing:-0.279px">Join the chat as a guest user</div>
<div class="card" id="left"></div>
<div class="abs" style="left:321px;top:310px;line-height:0"><svg class="ic" width="19.2" height="14" viewBox="0 0 19.2 14"><path d="M0.9 2V10.4Q0.9 13.1 3.6 13.1H16.2" stroke="#e0e0e0" stroke-width="1.6" fill="none"/><rect x="3.6" y="0" width="15.6" height="11.1" rx="2" fill="#e0e0e0"/><path d="M6.5 8.7l2.700-3 1 .9 2-3.300 3.400 5.400z" fill="#2a2a2a"/><circle cx="7.600" cy="3" r=".95" fill="#2a2a2a"/></svg></div><div class="t" id="t_choose" style="left:344.29px;top:311px;font-size:14.8px;color:#e0e0e0;letter-spacing:0.076px;font-weight:bold">Choose Your Avatar</div>
<div id="gal"><div class="sec" style="top:6px;height:35px"></div><div class="abs" style="left:27.5px;top:15.5px;line-height:0"><svg class="ic" width="17" height="16" viewBox="0 0 17 16"><path d="M8.500 0.300l2.500 5.100 5.600 0.800-4.050 3.950 0.950 5.600-5-2.650-5 2.650 0.950-5.600L0.400 6.200l5.600-0.800z" fill="#007bff" stroke="#007bff" stroke-width=".8" stroke-linejoin="round"/></svg></div><div class="t" id="t_sec1" style="left:52.75px;top:17px;font-size:16px;color:#007bff;letter-spacing:0.247px;-webkit-text-stroke:.2px #007bff">Community Avatars</div><div class="sec" style="top:140px;height:36px"></div><div class="abs" style="left:27.5px;top:149.5px;line-height:0"><svg class="ic" width="17" height="16" viewBox="0 0 17 16"><path d="M8.500 0.300l2.500 5.100 5.600 0.800-4.050 3.950 0.950 5.600-5-2.650-5 2.650 0.950-5.600L0.400 6.200l5.600-0.800z" fill="#007bff" stroke="#007bff" stroke-width=".8" stroke-linejoin="round"/></svg></div><div class="t" id="t_sec2" style="left:52.35px;top:151px;font-size:16px;color:#007bff;letter-spacing:0.218px;-webkit-text-stroke:.2px #007bff">Default Avatars</div><div class="sec" style="top:339px;height:35px"></div><div class="abs" style="left:27.5px;top:348.5px;line-height:0"><svg class="ic" width="17" height="16" viewBox="0 0 17 16"><path d="M8.500 0.300l2.500 5.100 5.600 0.800-4.050 3.950 0.950 5.600-5-2.650-5 2.650 0.950-5.600L0.400 6.200l5.600-0.800z" fill="#007bff" stroke="#007bff" stroke-width=".8" stroke-linejoin="round"/></svg></div><div class="t" id="t_sec3" style="left:52.65px;top:350px;font-size:16px;color:#007bff;letter-spacing:0.216px;-webkit-text-stroke:.2px #007bff">Mushoku Avatars</div><div class="av " style="left:379px;top:58px"><svg width="58" height="58" viewBox="0 0 58 58"><rect width="58" height="58" rx="3" fill="#fff"/><svg x="2.2" y="2.2" width="53.6" height="53.6" viewBox="2.2 2.2 53.6 53.6"><rect x="2" y="2" width="54" height="54" fill="#a0a0a0"/><path d="M34 2H56V22.500Q51 21.5 50.8 17.500Q49 11.5 42.5 12Q39.5 11.5 39.8 8.500Q39.5 3.5 34 2z" fill="#fff"/><path d="M40.8 12.300L47.8 6M50.5 15.500l1.2-1.2" stroke="#a0a0a0" stroke-width="0.5" fill="none" stroke-linecap="round" stroke-linejoin="round"/><circle cx="32.3" cy="6.8" r="6" fill="#fff" stroke="#a0a0a0" stroke-width=".5"/><path d="M28.8 7.800a3.6 3.6 0 0 1 7.2-1.200l-.6 2.800z" fill="#a0a0a0"/><circle cx="45.3" cy="18.2" r="6" fill="#fff" stroke="#a0a0a0" stroke-width=".5"/><path d="M42.3 14.500a3.6 3.6 0 0 1 3 7.200q-2.5-3-3-7.200z" fill="#a0a0a0"/><path d="M5.5 31Q14 20 20 12Q26 6 34 9.500Q43 13 46 22Q46 28 40 31Q37 35 30 34.800H9Q4.5 34 5.5 31z" fill="#fff"/><circle cx="20.3" cy="17.1" r="3" fill="#a0a0a0"/><circle cx="19.6" cy="16.2" r=".8" fill="#fff"/><circle cx="31" cy="26.5" r="3" fill="#a0a0a0"/><circle cx="30.6" cy="25.5" r=".8" fill="#fff"/><circle cx="8.4" cy="31.7" r="2.3" fill="#a0a0a0"/><path d="M3 23.500l4 3.800M4 20.500l4 3.800M5.8 17.800l4 3.8" stroke="#fff" stroke-width="0.9" fill="none" stroke-linecap="round" stroke-linejoin="round"/><path d="M9.6 58V44Q9.6 38.2 15.5 38.200H17.500Q18.5 35.6 20 35.600H38.500Q40 35.6 41 38.200H42.500Q48.5 38.2 48.5 44V58z" fill="#fff"/><path d="M38.5 35.600V58" stroke="#c8c8c8" stroke-width="0.7" fill="none" stroke-linecap="round" stroke-linejoin="round"/><circle cx="21.9" cy="38.2" r="1.2" fill="#a0a0a0"/><circle cx="21.9" cy="50.8" r="1.2" fill="#a0a0a0"/><circle cx="34.3" cy="38.2" r="1.2" fill="#a0a0a0"/><circle cx="34.3" cy="50.8" r="1.2" fill="#a0a0a0"/></svg></svg></div><div class="av dk" style="left:27px;top:193px"><svg width="58" height="58" viewBox="0 0 58 58"><rect width="58" height="58" rx="3" fill="#000"/><circle cx="29" cy="20.2" r="15" fill="#fff"/><text x="29" y="31.8" font-family="Liberation Sans,sans-serif" font-size="30" text-anchor="middle" fill="#000" stroke="#000" stroke-width=".5">?</text><path d="M8.9 58V41a3 3 0 0 1 3 -3H45.1a3 3 0 0 1 3 3V58z" fill="#fff"/><path d="M16.3 46.8V58M40.7 46.8V58" stroke="#000" stroke-width="1.2" fill="none"/></svg></div><div class="av " style="left:91px;top:193px"><svg width="58" height="58" viewBox="0 0 58 58"><rect width="58" height="58" rx="3" fill="#fff"/><svg x="2.2" y="2.2" width="53.6" height="53.6" viewBox="2.2 2.2 53.6 53.6"><rect x="2" y="2" width="54" height="54" fill="#f0a22f"/><path d="M14.200000000000001 31L17.8 27.4L21.400000000000002 31L17.8 34.6z" fill="#fff"/><path d="M37.4 31L41 27.4L44.6 31L41 34.6z" fill="#fff"/><circle cx="29.2" cy="21" r="11.4" fill="#fff"/><circle cx="24.2" cy="22.2" r="1.7" fill="#f0a22f"/><circle cx="34.4" cy="22.2" r="1.7" fill="#f0a22f"/><path d="M29.2 10Q27 15.5 18.5 16.5M29.2 10Q32 15.5 40 16.5" stroke="#f0a22f" stroke-width="0.8" fill="none" stroke-linecap="round" stroke-linejoin="round"/><path d="M24.8 33.5h8.8v3.5h-8.8z" fill="#fff"/><path d="M12 58V41a5 5 0 0 1 5 -5H41.8a5 5 0 0 1 5 5V58z" fill="#fff"/><path d="M18 42.7V58M39.7 42.7V58" stroke="#f0a22f" stroke-width="1.3" fill="none"/><path d="M23.8 36.6h12.5v9.4q0 1.5-1.5 1.500h-9.500q-1.5 0-1.5-1.500z" stroke="#f0a22f" stroke-width="0.8" fill="none" stroke-linecap="round" stroke-linejoin="round"/><path d="M25.8 38l3 1.200v-.5h2.500v.5l3-1.200v3l-3-1.200v.5h-2.500v-.5l-3 1.200z" stroke="#f0a22f" stroke-width="0.6" fill="none" stroke-linecap="round" stroke-linejoin="round"/><path d="M12 48.800H18M39.7 48.800H46.8" stroke="#f0a22f" stroke-width="0.9" fill="none" stroke-linecap="round" stroke-linejoin="round"/></svg></svg></div><div class="av " style="left:155px;top:193px"><svg width="58" height="58" viewBox="0 0 58 58"><rect width="58" height="58" rx="3" fill="#fff"/><svg x="2.2" y="2.2" width="53.6" height="53.6" viewBox="2.2 2.2 53.6 53.6"><rect x="2" y="2" width="54" height="54" fill="#fb4a2f"/><path d="M14.2 37V21a15.6 14.8 0 0 1 31.2 0V37" stroke="#fff" stroke-width="0.9" fill="none" stroke-linecap="round" stroke-linejoin="round"/><path d="M12.5 7l2.8 2.2 2-3 .8 3.5 3.5.3-2.8 2.2" stroke="#fff" stroke-width="0.8" fill="none" stroke-linecap="round" stroke-linejoin="round"/><circle cx="29.8" cy="21" r="12.9" fill="#fff"/><circle cx="23.6" cy="21.5" r="2.1" fill="#fb4a2f"/><circle cx="36" cy="21.5" r="2.1" fill="#fb4a2f"/><path d="M23 13.500Q26 15.5 29 11.500Q32 16 37 13.5" stroke="#fb4a2f" stroke-width="0.8" fill="none" stroke-linecap="round" stroke-linejoin="round"/><path d="M11.2 58V40.6a4 4 0 0 1 4 -4H44a4 4 0 0 1 4 4V58z" fill="#fff"/><path d="M18.5 44.5V58M41 44.5V58" stroke="#fb4a2f" stroke-width="1.3" fill="none"/><path d="M23.5 37.500Q29.5 46 35.5 37.5" stroke="#fb4a2f" stroke-width="0.9" fill="none" stroke-linecap="round" stroke-linejoin="round"/></svg></svg></div><div class="av " style="left:219px;top:193px"><svg width="58" height="58" viewBox="0 0 58 58"><rect width="58" height="58" rx="3" fill="#fff"/><svg x="2.2" y="2.2" width="53.6" height="53.6" viewBox="2.2 2.2 53.6 53.6"><rect x="2" y="2" width="54" height="54" fill="#a75ea5"/><circle cx="16.8" cy="10.6" r="4.4" fill="#fff"/><circle cx="41.6" cy="10.6" r="4.4" fill="#fff"/><circle cx="29" cy="21" r="11.8" fill="#fff"/><circle cx="23.5" cy="22" r="1.8" fill="#a75ea5"/><circle cx="34.5" cy="22" r="1.8" fill="#a75ea5"/><path d="M29 10Q27 15.5 18 16.500M29 10Q31.5 15.5 40 16.5" stroke="#a75ea5" stroke-width="0.8" fill="none" stroke-linecap="round" stroke-linejoin="round"/><path d="M13 16.900h1.700v1.700H13zM13 20.200h1.700v1.700H13zM13 23.500h1.700v1.700H13zM43.4 16.900h1.700v1.700h-1.700zM43.4 20.200h1.700v1.700h-1.700zM43.4 23.500h1.700v1.700h-1.700z" fill="#fff"/><path d="M24.5 33h9.500v4h-9.500z" fill="#fff"/><path d="M12 58V41.5a5 5 0 0 1 5 -5H41a5 5 0 0 1 5 5V58z" fill="#fff"/><path d="M18.5 44.5V58M40 44.5V58" stroke="#a75ea5" stroke-width="1.3" fill="none"/><path d="M12 48.500H18.500M40 48.500H46" stroke="#a75ea5" stroke-width="0.9" fill="none" stroke-linecap="round" stroke-linejoin="round"/></svg></svg></div><div class="av " style="left:283px;top:193px"><svg width="58" height="58" viewBox="0 0 58 58"><rect width="58" height="58" rx="3" fill="#fff"/><svg x="2.2" y="2.2" width="53.6" height="53.6" viewBox="2.2 2.2 53.6 53.6"><rect x="2" y="2" width="54" height="54" fill="#dc69a6"/><circle cx="17.7" cy="28.5" r="2.1" fill="#fff"/><circle cx="15.4" cy="30.8" r="2.1" fill="#fff"/><circle cx="13.2" cy="33.1" r="2.1" fill="#fff"/><circle cx="10.9" cy="35.4" r="2.1" fill="#fff"/><circle cx="41.4" cy="28.5" r="2.1" fill="#fff"/><circle cx="43.7" cy="30.8" r="2.1" fill="#fff"/><circle cx="45.9" cy="33.1" r="2.1" fill="#fff"/><circle cx="48.2" cy="35.4" r="2.1" fill="#fff"/><circle cx="29.3" cy="21" r="11.5" fill="#fff"/><circle cx="24.2" cy="22" r="1.7" fill="#dc69a6"/><circle cx="34.6" cy="22" r="1.7" fill="#dc69a6"/><path d="M29.3 10Q27 15.5 18.5 17M29.3 10Q32 15.5 40 17" stroke="#dc69a6" stroke-width="0.8" fill="none" stroke-linecap="round" stroke-linejoin="round"/><path d="M18 19.700H40.5" stroke="#dc69a6" stroke-width="0.5" fill="none" stroke-linecap="round" stroke-linejoin="round"/><path d="M12 58V41.5a5 5 0 0 1 5 -5H41a5 5 0 0 1 5 5V58z" fill="#fff"/><path d="M18.5 46V58M40 46V58" stroke="#dc69a6" stroke-width="1.3" fill="none"/><path d="M20.5 37L29 47.500L37.5 37M23.5 37L29 44.500L34.5 37" stroke="#dc69a6" stroke-width="0.8" fill="none" stroke-linecap="round" stroke-linejoin="round"/><path d="M27.8 38h2.400l-1.2 5z" fill="#fff"/><path d="M12 48.300H18.500M40 48.300H46" stroke="#dc69a6" stroke-width="2.4" fill="none" stroke-linecap="round" stroke-linejoin="round"/></svg></svg></div><div class="av " style="left:347px;top:193px"><svg width="58" height="58" viewBox="0 0 58 58"><rect width="58" height="58" rx="3" fill="#fff"/><svg x="2.2" y="2.2" width="53.6" height="53.6" viewBox="2.2 2.2 53.6 53.6"><rect x="2" y="2" width="54" height="54" fill="#d0004f"/><circle cx="19.2" cy="10.8" r="1.7" fill="#fff"/><circle cx="22" cy="8.3" r="1.7" fill="#fff"/><circle cx="25.5" cy="6.8" r="1.7" fill="#fff"/><circle cx="29.2" cy="6.3" r="1.7" fill="#fff"/><circle cx="33" cy="6.8" r="1.7" fill="#fff"/><circle cx="36.5" cy="8.3" r="1.7" fill="#fff"/><circle cx="39.3" cy="10.8" r="1.7" fill="#fff"/><path d="M16.3 19a13 13 0 0 1 25.8 0" stroke="#fff" stroke-width="1.3" fill="none" stroke-linecap="round" stroke-linejoin="round"/><path d="M14.200000000000001 31L17.8 27.4L21.400000000000002 31L17.8 34.6z" fill="#fff"/><path d="M37.4 31L41 27.4L44.6 31L41 34.6z" fill="#fff"/><circle cx="29.2" cy="21" r="11.5" fill="#fff"/><circle cx="24" cy="21.8" r="1.8" fill="#d0004f"/><circle cx="34.4" cy="21.8" r="1.8" fill="#d0004f"/><path d="M18.5 17H31.500M31.5 10.500Q31.5 17 38.5 20" stroke="#d0004f" stroke-width="0.9" fill="none" stroke-linecap="round" stroke-linejoin="round"/><path d="M25 33h8.500v3.500H25z" fill="#fff"/><path d="M12 58V41a5 5 0 0 1 5 -5H41.8a5 5 0 0 1 5 5V58z" fill="#fff"/><path d="M18 44V58M39.7 44V58" stroke="#d0004f" stroke-width="1.3" fill="none"/><path d="M22.5 36.500H36.300V47.500H22.500zM22.5 40h13.800M22.5 43.700h13.800M23 36.500l13 3.500M36 36.500l-13 3.500M23 40l13 3.700M36 40l-13 3.700M23 43.700l13 3.800M36 43.700l-13 3.8" stroke="#d0004f" stroke-width="0.7" fill="none" stroke-linecap="round" stroke-linejoin="round"/><path d="M12 48.800H18M39.7 48.800H46.8" stroke="#d0004f" stroke-width="0.9" fill="none" stroke-linecap="round" stroke-linejoin="round"/></svg></svg></div><div class="av " style="left:411px;top:193px"><svg width="58" height="58" viewBox="0 0 58 58"><rect width="58" height="58" rx="3" fill="#fff"/><svg x="2.2" y="2.2" width="53.6" height="53.6" viewBox="2.2 2.2 53.6 53.6"><rect x="2" y="2" width="54" height="54" fill="#8e1f20"/><path d="M17.5 12.500Q29 2 40.5 12.500L38.5 14.500Q29 6.5 19.5 14.500z" fill="#fff"/><path d="M14.200000000000001 31L17.8 27.4L21.400000000000002 31L17.8 34.6z" fill="#fff"/><path d="M37.4 31L41 27.4L44.6 31L41 34.6z" fill="#fff"/><circle cx="29.2" cy="21" r="11.5" fill="#fff"/><circle cx="24" cy="21.8" r="1.7" fill="#8e1f20"/><circle cx="34.4" cy="21.8" r="1.7" fill="#8e1f20"/><path d="M29.2 11Q27 16 18.5 17M29.2 11Q32 16 40 17" stroke="#8e1f20" stroke-width="0.9" fill="none" stroke-linecap="round" stroke-linejoin="round"/><path d="M25 33h8.500v3.500H25z" fill="#fff"/><path d="M12 58V41a5 5 0 0 1 5 -5H41.8a5 5 0 0 1 5 5V58z" fill="#fff"/><path d="M18 44V58M39.7 44V58" stroke="#8e1f20" stroke-width="1.3" fill="none"/><path d="M12 48.800H18M39.7 48.800H46.8" stroke="#8e1f20" stroke-width="0.9" fill="none" stroke-linecap="round" stroke-linejoin="round"/></svg></svg></div><div class="av " style="left:475px;top:193px"><svg width="58" height="58" viewBox="0 0 58 58"><rect width="58" height="58" rx="3" fill="#fff"/><svg x="2.2" y="2.2" width="53.6" height="53.6" viewBox="2.2 2.2 53.6 53.6"><rect x="2" y="2" width="54" height="54" fill="#e26453"/><path d="M37.3 31L40.9 27.4L44.5 31L40.9 34.6z" fill="#fff"/><circle cx="28.8" cy="21" r="11.8" fill="#fff"/><circle cx="23.5" cy="21.8" r="1.7" fill="#e26453"/><circle cx="34" cy="21.8" r="1.7" fill="#e26453"/><path d="M33.5 10.500Q28 17.5 17.5 17.500M33.5 10.500Q35.5 16 39.5 18" stroke="#e26453" stroke-width="0.9" fill="none" stroke-linecap="round" stroke-linejoin="round"/><path d="M12 58V41.5a5 5 0 0 1 5 -5H41a5 5 0 0 1 5 5V58z" fill="#fff"/><path d="M18.5 44.5V58M40 44.5V58" stroke="#e26453" stroke-width="1.3" fill="none"/><path d="M22.5 37Q29 46 35.5 37" stroke="#e26453" stroke-width="0.8" fill="none" stroke-linecap="round" stroke-linejoin="round"/></svg></svg></div><div class="av sel" style="left:539px;top:193px"><svg width="58" height="58" viewBox="0 0 58 58"><rect width="58" height="58" rx="3" fill="#fff"/><svg x="2.2" y="2.2" width="53.6" height="53.6" viewBox="2.2 2.2 53.6 53.6"><rect x="2" y="2" width="54" height="54" fill="#91c0ea"/><circle cx="29" cy="21" r="12.2" fill="#fff"/><circle cx="24" cy="22.2" r="1.7" fill="#91c0ea"/><circle cx="34.5" cy="22.2" r="1.7" fill="#91c0ea"/><path d="M24.2 11.2Q29 18.5 40.4 17.7M24.2 11.2Q22.5 16 18.3 19.2" stroke="#91c0ea" stroke-width="0.9" fill="none" stroke-linecap="round" stroke-linejoin="round"/><path d="M12 58V41.3a5 5 0 0 1 5 -5H41a5 5 0 0 1 5 5V58z" fill="#fff"/><path d="M19 44.5V58M39.5 44.5V58" stroke="#91c0ea" stroke-width="1.3" fill="none"/><path d="M33 46H39.5" stroke="#91c0ea" stroke-width="0.9" fill="none" stroke-linecap="round" stroke-linejoin="round"/></svg></svg></div><div class="av " style="left:603px;top:193px"><svg width="58" height="58" viewBox="0 0 58 58"><rect width="58" height="58" rx="3" fill="#fff"/><svg x="2.2" y="2.2" width="53.6" height="53.6" viewBox="2.2 2.2 53.6 53.6"><rect x="2" y="2" width="54" height="54" fill="#6cb82b"/><circle cx="28.5" cy="21" r="12.8" fill="#fff"/><path d="M17 2.5H40V15H17z" fill="#fff"/><path d="M7.3 14.6H49.6V18.2H7.3z" fill="#fff"/><circle cx="22.8" cy="22.4" r="1.9" fill="#6cb82b"/><circle cx="34.2" cy="22.4" r="1.9" fill="#6cb82b"/><path d="M12 58V41.3a5 5 0 0 1 5 -5H41a5 5 0 0 1 5 5V58z" fill="#fff"/><path d="M17.6 45.5V58M39.4 45.5V58" stroke="#6cb82b" stroke-width="1.3" fill="none"/><path d="M20.3 37L28.5 54.5L37 37" stroke="#6cb82b" stroke-width="0.8" fill="none" stroke-linecap="round" stroke-linejoin="round"/><path d="M24 37.5l3.5 1.5v-.8h2v.8l3.5-1.500v4l-3.5-1.500v.8h-2v-.8l-3.5 1.500z" fill="#6cb82b"/></svg></svg></div><div class="av " style="left:667px;top:193px"><svg width="58" height="58" viewBox="0 0 58 58"><rect width="58" height="58" rx="3" fill="#fff"/><svg x="2.2" y="2.2" width="53.6" height="53.6" viewBox="2.2 2.2 53.6 53.6"><rect x="2" y="2" width="54" height="54" fill="#dba976"/><circle cx="29" cy="21" r="12.2" fill="#fff"/><circle cx="24" cy="22.2" r="1.7" fill="#dba976"/><circle cx="34.5" cy="22.2" r="1.7" fill="#dba976"/><path d="M24.2 11.2Q29 18.5 40.4 17.7M24.2 11.2Q22.5 16 18.3 19.2" stroke="#dba976" stroke-width="0.9" fill="none" stroke-linecap="round" stroke-linejoin="round"/><path d="M12 58V41.3a5 5 0 0 1 5 -5H41a5 5 0 0 1 5 5V58z" fill="#fff"/><path d="M19 44.5V58M39.5 44.5V58" stroke="#dba976" stroke-width="1.3" fill="none"/><circle cx="29" cy="41" r="1" fill="#dba976"/><circle cx="29" cy="45" r="1" fill="#dba976"/><circle cx="29" cy="49" r="1" fill="#dba976"/><path d="M24.5 34h9v3h-9z" fill="#fff"/><path d="M19 54H39.5" stroke="#dba976" stroke-width="0.8" fill="none" stroke-linecap="round" stroke-linejoin="round"/></svg></svg></div><div class="av " style="left:731px;top:193px"><svg width="58" height="58" viewBox="0 0 58 58"><rect width="58" height="58" rx="3" fill="#fff"/><svg x="2.2" y="2.2" width="53.6" height="53.6" viewBox="2.2 2.2 53.6 53.6"><rect x="2" y="2" width="54" height="54" fill="#ffdc00"/><path d="M40 31L43 28L46 31L43 34z" fill="#fff"/><circle cx="29" cy="21" r="12.2" fill="#fff"/><circle cx="24" cy="22.2" r="1.7" fill="#ffdc00"/><circle cx="34.5" cy="22.2" r="1.7" fill="#ffdc00"/><path d="M12 58V41.3a5 5 0 0 1 5 -5H41a5 5 0 0 1 5 5V58z" fill="#fff"/><path d="M19 44.5V58M39.5 44.5V58" stroke="#ffdc00" stroke-width="1.3" fill="none"/><path d="M22.5 36L29 49.5L35.5 36z" fill="#ffdc00"/></svg></svg></div><div class="av " style="left:59px;top:257px"><svg width="58" height="58" viewBox="0 0 58 58"><rect width="58" height="58" rx="3" fill="#fff"/><svg x="2.2" y="2.2" width="53.6" height="53.6" viewBox="2.2 2.2 53.6 53.6"><rect x="2" y="2" width="54" height="54" fill="#060202"/><path d="M14.4 21a15.2 15.6 0 0 1 30.4 0" stroke="#fff" stroke-width="2.6" fill="none"/><path d="M9 17q0-2.7 2.7-2.700H16V27.700H11.700Q9 27.7 9 25zM50.2 17q0-2.7-2.7-2.700H43.500V27.700h4q2.7 0 2.7-2.700z" fill="#fff"/><circle cx="29.6" cy="21.4" r="13.2" fill="#060202"/><circle cx="29.6" cy="21.4" r="12.2" fill="#fff"/><circle cx="23.8" cy="22" r="1.9" fill="#060202"/><circle cx="35.4" cy="22" r="1.9" fill="#060202"/><path d="M12.7 58V40a4 4 0 0 1 4 -4H42a4 4 0 0 1 4 4V58z" fill="#fff"/><path d="M18.5 44V58M39.7 44V58" stroke="#222" stroke-width="1.1" fill="none"/></svg></svg></div><div class="av " style="left:123px;top:257px"><svg width="58" height="58" viewBox="0 0 58 58"><rect width="58" height="58" rx="3" fill="#fff"/><svg x="2.2" y="2.2" width="53.6" height="53.6" viewBox="2.2 2.2 53.6 53.6"><rect x="2" y="2" width="54" height="54" fill="#9e9f9e"/><circle cx="29" cy="21" r="12.2" fill="#fff"/><circle cx="24" cy="22.2" r="1.7" fill="#9e9f9e"/><circle cx="34.5" cy="22.2" r="1.7" fill="#9e9f9e"/><path d="M29 9.5Q26 15.5 17.5 16.5M29 9.5Q32 15.5 40.5 16.5" stroke="#9e9f9e" stroke-width="0.9" fill="none" stroke-linecap="round" stroke-linejoin="round"/><path d="M12 58V41.3a5 5 0 0 1 5 -5H41a5 5 0 0 1 5 5V58z" fill="#fff"/><path d="M19 44.5V58M39.5 44.5V58" stroke="#9e9f9e" stroke-width="1.3" fill="none"/><path d="M23 36.5L29 52L35 36.5L32 36.5L29 44L26 36.5z" fill="#9e9f9e"/><path d="M28 38h2l.8 9-1.8 3.5-1.8-3.5z" fill="#c8c8c8"/></svg></svg></div><div class="av " style="left:187px;top:257px"><svg width="58" height="58" viewBox="0 0 58 58"><rect width="58" height="58" rx="3" fill="#fff"/><svg x="2.2" y="2.2" width="53.6" height="53.6" viewBox="2.2 2.2 53.6 53.6"><rect x="2" y="2" width="54" height="54" fill="#2d5ca8"/><circle cx="29.1" cy="21" r="12.2" fill="#fff"/><rect x="15.5" y="14" width="27.2" height="3.9" rx=".5" fill="#fff" stroke="#2d5ca8" stroke-width=".6"/><circle cx="23.8" cy="22.3" r="1.7" fill="#2d5ca8"/><circle cx="34.6" cy="22.3" r="1.7" fill="#2d5ca8"/><path d="M12 58V41a5 5 0 0 1 5 -5H41a5 5 0 0 1 5 5V58z" fill="#fff"/><path d="M18.8 44.5V58M39.5 44.5V58" stroke="#2d5ca8" stroke-width="1.3" fill="none"/><path d="M22.5 36L32.5 46L25.5 58M24.5 36L34.5 46L28 58M35.5 36L29 43.5" stroke="#2d5ca8" stroke-width="1" fill="none" stroke-linecap="round" stroke-linejoin="round"/></svg></svg></div><div class="av " style="left:251px;top:257px"><svg width="58" height="58" viewBox="0 0 58 58"><rect width="58" height="58" rx="3" fill="#fff"/><svg x="2.2" y="2.2" width="53.6" height="53.6" viewBox="2.2 2.2 53.6 53.6"><rect x="2" y="2" width="54" height="54" fill="#000"/><circle cx="29" cy="21" r="12" fill="#fff"/><circle cx="23.5" cy="22.3" r="1.8" fill="#000"/><circle cx="34.5" cy="22.3" r="1.8" fill="#000"/><path d="M31.5 9.500Q27 17 17.5 17.500M31.5 9.500Q34 16 40.5 18" stroke="#000" stroke-width="0.9" fill="none" stroke-linecap="round" stroke-linejoin="round"/><path d="M12.3 58V41a5 5 0 0 1 5 -5H40.7a5 5 0 0 1 5 5V58z" fill="#fff"/><path d="M17.3 36H23.700L28.8 51L34 36H40.700V58H17.300z" fill="#000"/><path d="M24.8 37.200l3 1.300v-.6h2v.6l3-1.300v3.600l-3-1.300v.6h-2v-.6l-3 1.300z" fill="#000"/></svg></svg></div><div class="av " style="left:315px;top:257px"><svg width="58" height="58" viewBox="0 0 58 58"><rect width="58" height="58" rx="3" fill="#fff"/><svg x="2.2" y="2.2" width="53.6" height="53.6" viewBox="2.2 2.2 53.6 53.6"><rect x="2" y="2" width="54" height="54" fill="#5c7a55"/><circle cx="29.2" cy="21" r="12" fill="#fff"/><path d="M12 16.800H40V19H12z" fill="#fff"/><path d="M18 19.500H40.5" stroke="#5c7a55" stroke-width="0.7" fill="none" stroke-linecap="round" stroke-linejoin="round"/><path d="M25.8 15.200h6.500v1.200h-6.500z" fill="#5c7a55"/><circle cx="24" cy="21.9" r="1.7" fill="#5c7a55"/><circle cx="34.5" cy="21.9" r="1.7" fill="#5c7a55"/><path d="M12 58V41.5a5 5 0 0 1 5 -5H41a5 5 0 0 1 5 5V58z" fill="#fff"/><path d="M18.3 45V58M40 45V58" stroke="#5c7a55" stroke-width="1.3" fill="none"/><path d="M24 37Q29 43 34 37" stroke="#5c7a55" stroke-width="0.8" fill="none" stroke-linecap="round" stroke-linejoin="round"/><path d="M12 48.500H18.300M40 48.500H46" stroke="#5c7a55" stroke-width="0.9" fill="none" stroke-linecap="round" stroke-linejoin="round"/></svg></svg></div><div class="av dk" style="left:379px;top:257px"><svg width="58" height="58" viewBox="0 0 58 58"><rect width="58" height="58" rx="3" fill="#fff"/><circle cx="29.5" cy="21" r="14" fill="#000"/><circle cx="23.5" cy="21.5" r="1.7" fill="#fff"/><circle cx="35.5" cy="21.5" r="1.7" fill="#fff"/><path d="M9.5 58V41.5a3 3 0 0 1 3 -3H46.5a3 3 0 0 1 3 3V58z" fill="#000"/><path d="M17.3 48V58M41.6 48V58" stroke="#fff" stroke-width="1.2" fill="none"/></svg></div><div class="av " style="left:443px;top:257px"><svg width="58" height="58" viewBox="0 0 58 58"><rect width="58" height="58" rx="3" fill="#fff"/><svg x="2.2" y="2.2" width="53.6" height="53.6" viewBox="2.2 2.2 53.6 53.6"><rect x="2" y="2" width="54" height="54" fill="#89500f"/><circle cx="29.6" cy="22" r="12.2" fill="#fff6ea"/><path d="M18.5 15.500V7.500Q18.5 5 21 5H37.700Q40.2 5 40.2 7.500V15.500z" fill="#fff6ea"/><rect x="16" y="13.9" width="27" height="2" fill="#89500f"/><path d="M9 17q0-2.3 2.3-2.300h35.400q2.3 0 2.3 2.3 0 2.3-2.3 2.300H11.300Q9 19.3 9 17z" fill="#fff6ea"/><circle cx="24.2" cy="23.3" r="1.8" fill="#89500f"/><circle cx="35" cy="23.3" r="1.8" fill="#89500f"/><path d="M12 58V42a5 5 0 0 1 5 -5H41.5a5 5 0 0 1 5 5V58z" fill="#fff6ea"/><path d="M19 46V58M39.5 46V58" stroke="#89500f" stroke-width="1.3" fill="none"/><path d="M21 37.500L29.3 53.500L37.5 37.5" stroke="#89500f" stroke-width="0.8" fill="none" stroke-linecap="round" stroke-linejoin="round"/><path d="M24.5 38.500l3.5 1.400v-.7h2.500v.7l3.5-1.400v3.800l-3.5-1.400v.7h-2.500v-.7l-3.5 1.400z" fill="#89500f"/></svg></svg></div><div class="av " style="left:507px;top:257px"><svg width="58" height="58" viewBox="0 0 58 58"><rect width="58" height="58" rx="3" fill="#fff"/><svg x="2.2" y="2.2" width="53.6" height="53.6" viewBox="2.2 2.2 53.6 53.6"><rect x="2" y="2" width="54" height="54" fill="#000"/><circle cx="40.7" cy="17" r="14.2" fill="#fff"/><circle cx="34.5" cy="10" r="1.9" fill="#000"/><circle cx="41.7" cy="27.7" r="1.9" fill="#000"/><path d="M10 58V41a3 3 0 0 1 3 -3H44.4a3 3 0 0 1 3 3V58z" fill="#fff"/><path d="M25.5 48V58M40.7 48V58" stroke="#999" stroke-width="0.8" fill="none" stroke-linecap="round" stroke-linejoin="round"/></svg></svg></div><div class="av " style="left:571px;top:257px"><svg width="58" height="58" viewBox="0 0 58 58"><rect width="58" height="58" rx="3" fill="#fff"/><svg x="2.2" y="2.2" width="53.6" height="53.6" viewBox="2.2 2.2 53.6 53.6"><rect x="2" y="2" width="54" height="54" fill="#9230b1"/><path d="M25.5 5H32.200V9.500H25.500zM27 9.500h3.700v2H27z" fill="#fff"/><path d="M14.8 19.500a14.6 14.6 0 0 1 28 0" stroke="#fff" stroke-width="1.8" fill="none"/><circle cx="28.8" cy="22.7" r="12.6" fill="#fff"/><circle cx="23.8" cy="23" r="1.7" fill="#9230b1"/><circle cx="33.8" cy="23" r="1.7" fill="#9230b1"/><path d="M7.7 36H49.700L42 58H15.500z" fill="#fff"/><path d="M17 37.500L26 58M41 37.500L32 58M22.5 37.500L28.8 50L35 37.500M25 44L33 56.500M33 44L25 56.5" stroke="#9230b1" stroke-width="1.1" fill="none" stroke-linecap="round" stroke-linejoin="round"/><path d="M2 42L12.5 58H2zM56 42L45.5 58H56z" fill="#9230b1"/></svg></svg></div><div class="av dk" style="left:635px;top:257px"><svg width="58" height="58" viewBox="0 0 58 58"><rect width="58" height="58" rx="3" fill="#2d4b7e"/><path d="M4.8 11.800H58V33.500H4.800z" fill="#fff"/><path d="M4.8 4h3.200v8H4.800z" fill="#fff"/><path d="M12 8.500l5-3.500M20 9l6-4M29 9l6-4M38 9l6-4M47 9l6-4" stroke="#fff" stroke-width="1.8" fill="none" stroke-linecap="round" stroke-linejoin="round"/><rect x="7.7" y="15.7" width="8.8" height="8.6" fill="#2d4b7e"/><rect x="21.5" y="15.7" width="6.7" height="8.6" fill="#2d4b7e"/><rect x="31.5" y="15.7" width="6.7" height="8.6" fill="#2d4b7e"/><rect x="42.3" y="15.7" width="5.8" height="8.6" fill="#2d4b7e"/><rect x="50.7" y="15.7" width="6.7" height="8.6" fill="#2d4b7e"/><circle cx="6.8" cy="35.7" r="1.9" fill="#fff"/><circle cx="13.8" cy="35.7" r="1.9" fill="#fff"/><circle cx="20.8" cy="35.7" r="1.9" fill="#fff"/><circle cx="27.8" cy="35.7" r="1.9" fill="#fff"/><circle cx="34.8" cy="35.7" r="1.9" fill="#fff"/><circle cx="41.8" cy="35.7" r="1.9" fill="#fff"/><circle cx="48.8" cy="35.7" r="1.9" fill="#fff"/><circle cx="55.8" cy="35.7" r="1.9" fill="#fff"/><path d="M9.3 58V40.5a2 2 0 0 1 2 -2H46.2a2 2 0 0 1 2 2V58z" fill="#fff"/><path d="M16.5 46V58M40.7 46V58" stroke="#2d4b7e" stroke-width="1.2" fill="none"/></svg></div><div class="av " style="left:699px;top:257px"><svg width="58" height="58" viewBox="0 0 58 58"><rect width="58" height="58" rx="3" fill="#fff"/><svg x="2.2" y="2.2" width="53.6" height="53.6" viewBox="2.2 2.2 53.6 53.6"><rect x="2" y="2" width="54" height="54" fill="#000"/><ellipse cx="28.8" cy="19.3" rx="13.7" ry="12.5" fill="#fff"/><path d="M24.8 29h8.300v7.800H24.800z" fill="#fff"/><ellipse cx="22.8" cy="20.5" rx="4.3" ry="5.3" fill="#000" transform="rotate(18 22.8 20.5)"/><ellipse cx="34.8" cy="20.5" rx="4.3" ry="5.3" fill="#000" transform="rotate(-18 34.8 20.5)"/><path d="M27.7 27.500l1.1-2.8 1.1 2.800z" fill="#000"/><path d="M26.8 32.500V36.800M28.9 32.500V36.800M31 32.500V36.8" stroke="#000" stroke-width="0.7" fill="none" stroke-linecap="round" stroke-linejoin="round"/><path d="M10 58V41.7a4 4 0 0 1 4 -4H43.5a4 4 0 0 1 4 4V58z" fill="#fff"/><path d="M17.5 47V58M40.8 47V58" stroke="#777" stroke-width="0.9" fill="none"/></svg></svg></div><div class="av " style="left:27px;top:391px"><svg width="58" height="58" viewBox="0 0 58 58"><rect width="58" height="58" rx="3" fill="#fff"/><svg x="2.2" y="2.2" width="53.6" height="53.6" viewBox="2.2 2.2 53.6 53.6"><rect x="2" y="2" width="54" height="54" fill="#c4cc31"/><circle cx="29" cy="21.4" r="12" fill="#f5f5f5"/><circle cx="23.7" cy="22" r="1.7" fill="#c4cc31"/><circle cx="34.8" cy="22" r="1.7" fill="#c4cc31"/><path d="M29 34Q36 36 44 44Q50 50 45 53.5Q38 56 29 52.5Q20 56 13 53.5Q8 50 14 44Q22 36 29 34z" fill="#f5f5f5"/></svg></svg></div><div class="av " style="left:91px;top:391px"><svg width="58" height="58" viewBox="0 0 58 58"><rect width="58" height="58" rx="3" fill="#fff"/><svg x="2.2" y="2.2" width="53.6" height="53.6" viewBox="2.2 2.2 53.6 53.6"><rect x="2" y="2" width="54" height="54" fill="#ec8426"/><circle cx="16.5" cy="12" r="4.8" fill="#fff"/><circle cx="41.9" cy="12" r="4.8" fill="#fff"/><circle cx="16.5" cy="12" r="2.6" fill="#ec8426"/><circle cx="41.9" cy="12" r="2.6" fill="#ec8426"/><ellipse cx="29.2" cy="21" rx="14" ry="12.5" fill="#fff"/><circle cx="23" cy="21" r="1" fill="#ec8426"/><circle cx="35.5" cy="21" r="1" fill="#ec8426"/><path d="M27.5 23.5h3.4l-1.7 2z" fill="#ec8426"/><path d="M24.5 30.5Q29 28.5 34 30.5Q29 33 24.5 30.5" stroke="#ec8426" stroke-width="0.7" fill="none" stroke-linecap="round" stroke-linejoin="round"/><path d="M5 58Q8 40 16 31L29 35L42 31Q50 40 53 58z" fill="#fff"/><path d="M17 32Q22 38 27 39V58M41 32Q36 37 31 38.5M27 39H33V44H27M31 44V58M9 43L12 58M49 43L46 58" stroke="#ec8426" stroke-width="0.8" fill="none" stroke-linecap="round" stroke-linejoin="round"/><circle cx="41" cy="50" r="3.6" fill="none" stroke="#ec8426" stroke-width=".9"/><circle cx="41" cy="50" r="1.3" fill="#ec8426"/><path d="M36 46l10 8M46 46l-10 8" stroke="#ec8426" stroke-width="0.7" fill="none" stroke-linecap="round" stroke-linejoin="round"/></svg></svg></div><div class="av " style="left:155px;top:391px"><svg width="58" height="58" viewBox="0 0 58 58"><rect width="58" height="58" rx="3" fill="#fff"/><svg x="2.2" y="2.2" width="53.6" height="53.6" viewBox="2.2 2.2 53.6 53.6"><rect x="2" y="2" width="54" height="54" fill="#000"/><path d="M21.5 10.8Q21 4.5 24 4.8Q29 6.5 34 4.8Q37 4.5 36.9 10.8Q44 12 45.9 15Q46 17.5 41.5 18V26Q41 29 37 31L35 35H23L21 31Q17 29 16.5 26V18Q11.5 17.5 11.7 15Q14 12 21.5 10.8z" fill="#fff"/><path d="M21 21.2l4.5.6v1.6l-4.5-.4zM37 21.2l-4.5.6v1.6l4.5-.4z" fill="#000"/><path d="M15 19v7M14 21l2 1M43 19v7M44 21l-2 1" stroke="#fff" stroke-width="0.6" fill="none" stroke-linecap="round" stroke-linejoin="round"/><path d="M12 58V40.3a4 4 0 0 1 4 -4H41.5a4 4 0 0 1 4 4V58z" fill="#fff"/><path d="M19 45V58M39 45V58" stroke="#000" stroke-width="0.8" fill="none"/><path d="M27.5 40l2.5 2M30 40l-2.5 2M27.5 45l2.5 2M30 45l-2.5 2M27.5 50l2.5 2M30 50l-2.5 2" stroke="#777" stroke-width="0.7" fill="none" stroke-linecap="round" stroke-linejoin="round"/></svg></svg></div><div class="av " style="left:219px;top:391px"><svg width="58" height="58" viewBox="0 0 58 58"><rect width="58" height="58" rx="3" fill="#fff"/><svg x="2.2" y="2.2" width="53.6" height="53.6" viewBox="2.2 2.2 53.6 53.6"><rect x="2" y="2" width="54" height="54" fill="#ff97a9"/><path d="M29 7Q43 7 44 22Q45 30 49 40Q52 48 51.5 58H6.5Q6 48 9 40Q13 30 14 22Q15 7 29 7z" fill="#fff"/><circle cx="11.5" cy="24.5" r="3.8" fill="#fff"/><circle cx="46.5" cy="24.5" r="3.8" fill="#fff"/><path d="M16 23a12.8 12.8 0 0 0 26 0M15 22Q12 35 10 45T8 58M43 22Q46 35 48 45T50 58M12.5 40V58M15.5 36V58M45.5 40V58M42.5 36V58M18.5 40V58M39.5 40V58" stroke="#ff97a9" stroke-width="0.7" fill="none" stroke-linecap="round" stroke-linejoin="round"/><path d="M22 11Q24 17 19 21M26 9.5Q29 15 25 19.5M31 9.5Q34 14 31 19M35 10.5Q38 15 41 19" stroke="#ff97a9" stroke-width="0.7" fill="none" stroke-linecap="round" stroke-linejoin="round"/><circle cx="23.5" cy="24" r="1.1" fill="#ff97a9"/><circle cx="34.5" cy="24" r="1.1" fill="#ff97a9"/><path d="M23 38.5H35V47H23zM25 41h8M26 47V58M32 47V58M28 51h2.5M28 54.5h2.5" stroke="#ff97a9" stroke-width="0.8" fill="none" stroke-linecap="round" stroke-linejoin="round"/></svg></svg></div><div class="av " style="left:283px;top:391px"><svg width="58" height="58" viewBox="0 0 58 58"><rect width="58" height="58" rx="3" fill="#fff"/><svg x="2.2" y="2.2" width="53.6" height="53.6" viewBox="2.2 2.2 53.6 53.6"><rect x="2" y="2" width="54" height="54" fill="#005628"/><circle cx="28.6" cy="18.5" r="14.8" fill="#fff"/><path d="M16 12l3 11 2-8 2 10 2.5-7 2 8 3-10 3 9 2.5-7 2 8 2-10M18 9l2 8M40 12l1 10M15.5 16l2 9" stroke="#005628" stroke-width="0.8" fill="none" stroke-linecap="round" stroke-linejoin="round"/><ellipse cx="24.5" cy="23" rx="2.6" ry="2.1" fill="#005628"/><path d="M13.6 58V41.4a4 4 0 0 1 4 -4H40.8a4 4 0 0 1 4 4V58z" fill="#fff"/><path d="M20 38.5L29 47L38 38.5M22 38.5L29 52L36 38.5M20 44Q29 50 38 44M20 50Q29 56 38 50M24 38.5V58M34 38.5V58M29 38.5V58M20 58L27 40M38 58L31 40" stroke="#005628" stroke-width="0.6" fill="none" stroke-linecap="round" stroke-linejoin="round"/></svg></svg></div><div class="av " style="left:347px;top:391px"><svg width="58" height="58" viewBox="0 0 58 58"><rect width="58" height="58" rx="3" fill="#fff"/><svg x="2.2" y="2.2" width="53.6" height="53.6" viewBox="2.2 2.2 53.6 53.6"><rect x="2" y="2" width="54" height="54" fill="#f2c7a9"/><path d="M5 31Q5.5 10 29 10Q52 10 52.5 31Q52.5 46.5 29 46.500Q5 46.5 5 31z" fill="#fff"/><path d="M6.8 31Q7.3 12 29 12Q50.3 12 50.7 31Q50.7 44.7 29 44.700Q6.8 44.7 6.8 31z" fill="none" stroke="#f2c7a9" stroke-width=".5"/><path d="M37 21.500V28.800M40.4 21.500V28.8" stroke="#f2c7a9" stroke-width="0.6" fill="none" stroke-linecap="round" stroke-linejoin="round"/></svg></svg></div><div class="av " style="left:411px;top:391px"><svg width="58" height="58" viewBox="0 0 58 58"><rect width="58" height="58" rx="3" fill="#fff"/><svg x="2.2" y="2.2" width="53.6" height="53.6" viewBox="2.2 2.2 53.6 53.6"><rect x="2" y="2" width="54" height="54" fill="#39609e"/><circle cx="29.1" cy="21" r="12.4" fill="#fff"/><path d="M18.5 17l2-3 1 3 2-4 1 4 2-5 1.5 5 2-5 1 5 2-4.5 1 4 2-3 1 4" stroke="#39609e" stroke-width="0.7" fill="none" stroke-linecap="round" stroke-linejoin="round"/><circle cx="23.5" cy="22" r="1.7" fill="#0a2a80"/><circle cx="34.5" cy="22" r="1.7" fill="#0a2a80"/><path d="M12 58V39Q12 37 14 37H22Q23 35.3 25 35.3H33Q35 35.3 36 37H44Q46 37 46 39V58" stroke="#fff" stroke-width="0.7" fill="none" stroke-linecap="round" stroke-linejoin="round"/><path d="M16 58V43a5 5 0 0 1 5 -5H37a5 5 0 0 1 5 5V58z" fill="#fff"/><path d="M21 46V58M37 46V58" stroke="#39609e" stroke-width="0.8" fill="none"/><path d="M29 38V58" stroke="#39609e" stroke-width="0.7" fill="none" stroke-linecap="round" stroke-linejoin="round"/></svg></svg></div><div class="av " style="left:475px;top:391px"><svg width="58" height="58" viewBox="0 0 58 58"><rect width="58" height="58" rx="3" fill="#fff"/><svg x="2.2" y="2.2" width="53.6" height="53.6" viewBox="2.2 2.2 53.6 53.6"><rect x="2" y="2" width="54" height="54" fill="#908f8f"/><circle cx="29" cy="21" r="12.2" fill="#fff"/><path d="M12 58V41.3a5 5 0 0 1 5 -5H41a5 5 0 0 1 5 5V58z" fill="#fff"/><path d="M19 44.5V58M39.5 44.5V58" stroke="#908f8f" stroke-width="1.3" fill="none"/><path d="M24 36.5L29 58L34 36.5z" fill="#908f8f"/><path d="M27.8 39h2.4l1.3 13-2.5 6-2.5-6z" fill="#aaa"/><path d="M24 36.5l2.5 4 2.5-2.5 2.5 2.5 2.5-4" stroke="#fff" stroke-width="0.9" fill="none" stroke-linecap="round" stroke-linejoin="round"/><path d="M33 48H39.5" stroke="#908f8f" stroke-width="0.9" fill="none" stroke-linecap="round" stroke-linejoin="round"/><circle cx="24.5" cy="21.5" r="2.3" fill="none" stroke="#908f8f" stroke-width=".7"/><circle cx="33.5" cy="21.5" r="2.3" fill="none" stroke="#908f8f" stroke-width=".7"/><path d="M26.8 21.5h4.4M17 21.5h5.2M35.8 21.5h5.2" stroke="#908f8f" stroke-width="0.7" fill="none" stroke-linecap="round" stroke-linejoin="round"/></svg></svg></div><div class="av " style="left:539px;top:391px"><svg width="58" height="58" viewBox="0 0 58 58"><rect width="58" height="58" rx="3" fill="#fff"/><svg x="2.2" y="2.2" width="53.6" height="53.6" viewBox="2.2 2.2 53.6 53.6"><rect x="2" y="2" width="54" height="54" fill="#c8704e"/><path d="M29 6l2-3 .5 3.5Q42 8 43 20L46 28L41 27L43 32L38 30L36 34H22L20 30L15 32L17 27L12 28L15 20Q16 8 29 6z" fill="#fff"/><path d="M17.5 21a11.5 11.5 0 0 0 23 0" stroke="#c8704e" stroke-width="0.6" fill="none" stroke-linecap="round" stroke-linejoin="round"/><path d="M20 16l2 3 1-3 2 3 1-3 2 3 1-3 2 3 1-3 2 3 1-3 2 3" stroke="#c8704e" stroke-width="0.6" fill="none" stroke-linecap="round" stroke-linejoin="round"/><circle cx="24" cy="24" r="1.3" fill="#c8704e"/><circle cx="34.5" cy="24" r="1.3" fill="#c8704e"/><path d="M12.5 58V41.5a4 4 0 0 1 4 -4H41a4 4 0 0 1 4 4V58z" fill="#fff"/><path d="M24 38l5 3 5-3M24 38l2 4M34 38l-2 4M29 41v17M26 44h6v8h-6zM19 38V58M39 38V58M12 51H19M39 51H46M21.5 38V58M36.5 38V58" stroke="#c8704e" stroke-width="0.6" fill="none" stroke-linecap="round" stroke-linejoin="round"/></svg></svg></div><div class="av " style="left:603px;top:391px"><svg width="58" height="58" viewBox="0 0 58 58"><rect width="58" height="58" rx="3" fill="#fff"/><svg x="2.2" y="2.2" width="53.6" height="53.6" viewBox="2.2 2.2 53.6 53.6"><rect x="2" y="2" width="54" height="54" fill="#62aec8"/><path d="M15 20a14 14 0 0 1 28 0" stroke="#fff" stroke-width="1.2" fill="none"/><path d="M17.5 20a11.5 11.5 0 0 1 23 0" stroke="#fff" stroke-width="1" fill="none"/><path d="M14 17Q8 20 9 30Q11 33 15 28zM44 17Q50 20 49 30Q47 33 43 28z" fill="#fff"/><path d="M11 12l3-2 2 2 3-1-1 4-5 1zM47 12l-3-2-2 2-3-1 1 4 5 1z" fill="#fff"/><circle cx="29" cy="24" r="12" fill="#fff"/><path d="M17 24Q17 12 29 12Q41 12 41 24Q38 16 34 17Q30 20 26 16Q21 17 17 24z" fill="#fff"/><path d="M18 22Q22 15 26 16.500M41 22Q37 16 32 18" stroke="#62aec8" stroke-width="0.7" fill="none" stroke-linecap="round" stroke-linejoin="round"/><circle cx="23.5" cy="25.5" r="1.5" fill="#62aec8"/><circle cx="35" cy="25.5" r="1.5" fill="#62aec8"/><path d="M12.5 58V41.8a4 4 0 0 1 4 -4H41.5a4 4 0 0 1 4 4V58z" fill="#fff"/><path d="M18.7 38.300H24.500L29 51L33.5 38.300H39.500L29 57.500z" fill="#62aec8"/><path d="M20.5 39L29 55M37.5 39L29 55" stroke="#fff" stroke-width="0.6" fill="none" stroke-linecap="round" stroke-linejoin="round"/><path d="M25.5 41.500h7M26 44h6M27 46.500h4" stroke="#62aec8" stroke-width="0.8" fill="none" stroke-linecap="round" stroke-linejoin="round"/><path d="M39.7 47h4.800v5.200h-4.800z" fill="#62aec8"/><path d="M18.5 46V58" stroke="#62aec8" stroke-width="0.6" fill="none" stroke-linecap="round" stroke-linejoin="round"/></svg></svg></div><div class="av " style="left:667px;top:391px"><svg width="58" height="58" viewBox="0 0 58 58"><rect width="58" height="58" rx="3" fill="#fff"/><svg x="2.2" y="2.2" width="53.6" height="53.6" viewBox="2.2 2.2 53.6 53.6"><rect x="2" y="2" width="54" height="54" fill="#005628"/><path d="M21 8Q25 4.5 29 6.5Q33 4.5 37 8L41.5 18Q43 19 42 20.5H16Q15 19 16.5 18z" fill="#fff"/><path d="M19.5 11.5H38.5M18 15H40" stroke="#005628" stroke-width="1.2" fill="none" stroke-linecap="round" stroke-linejoin="round"/><path d="M19.5 21H39V31L36.5 29.500L35 33.500H23.500L22 29.500L19.5 31z" fill="#fff"/><path d="M16.5 21V35L19.5 31M42 21V35L39 31" stroke="#fff" stroke-width="0.7" fill="none" stroke-linecap="round" stroke-linejoin="round"/><path d="M22 22l6 2-1.5 2.5zM36 22l-6 2 1.5 2.5z" fill="#005628"/><path d="M30 21L27 28H31L25 33.5" stroke="#005628" stroke-width="0.7" fill="none" stroke-linecap="round" stroke-linejoin="round"/><path d="M12.5 58L14.5 40.500L17.5 37.800H41L44 40.500L46 58M14.8 58L16.5 42L19 40L23 58M43.8 58L42 42L39.5 40L35.5 58M19 45V58M39.5 45V58" stroke="#fff" stroke-width="0.7" fill="none" stroke-linecap="round" stroke-linejoin="round"/><path d="M24 38.500L29 50L34 38.500z" fill="#fff"/><path d="M28 40.500h2l1 8-2 3-2-3z" fill="#005628"/><path d="M24 38.500L27 42L29 40L31 42L34 38.5" stroke="#005628" stroke-width="0.5" fill="none" stroke-linecap="round" stroke-linejoin="round"/></svg></svg></div><div class="av " style="left:731px;top:391px"><svg width="58" height="58" viewBox="0 0 58 58"><rect width="58" height="58" rx="3" fill="#fff"/><svg x="2.2" y="2.2" width="53.6" height="53.6" viewBox="2.2 2.2 53.6 53.6"><rect x="2" y="2" width="54" height="54" fill="#d8282c"/><path d="M14 14l-4 1 5 1Q13 22 14 28L17 32Q19 36 24 36L26 33H34L36 36Q40 34 42 28Q43 20 41 15Q37 8 29 8Q20 8 14 14z" fill="#fff"/><path d="M18.5 22a11 11 0 0 0 22 0M29 9Q24 16 22 26M29 9Q33 18 38 20M33 14L36 24" stroke="#d8282c" stroke-width="0.6" fill="none" stroke-linecap="round" stroke-linejoin="round"/><circle cx="25" cy="24.5" r="1.1" fill="#d8282c"/><circle cx="35.5" cy="24.5" r="1.1" fill="#d8282c"/><path d="M17 12L13 27M15 12L11.5 24" stroke="#d8282c" stroke-width="0.5" fill="none" stroke-linecap="round" stroke-linejoin="round"/><path d="M13 58V42.5a4 4 0 0 1 4 -4H41a4 4 0 0 1 4 4V58z" fill="#fff"/><path d="M26 36L30 44M27 43l5-2M27.5 45l5-2M19.5 46V58M39 46V58M18.5 46V58" stroke="#d8282c" stroke-width="0.7" fill="none" stroke-linecap="round" stroke-linejoin="round"/></svg></svg></div><div class="av " style="left:27px;top:455px"><svg width="58" height="58" viewBox="0 0 58 58"><rect width="58" height="58" rx="3" fill="#fff"/><svg x="2.2" y="2.2" width="53.6" height="53.6" viewBox="2.2 2.2 53.6 53.6"><rect x="2" y="2" width="54" height="54" fill="#e8ce40"/><circle cx="29" cy="14" r="6" fill="#fff"/><circle cx="19" cy="19.5" r="6.5" fill="#fff"/><circle cx="39" cy="19.5" r="6.5" fill="#fff"/><circle cx="22.5" cy="30" r="6.5" fill="#fff"/><circle cx="35.5" cy="30" r="6.5" fill="#fff"/><circle cx="29" cy="23" r="9" fill="#fff"/><path d="M22.5 22l3.5 1M35.5 22l-3.5 1M29 22V27M26.5 30.500Q29 28.5 31.5 30.5" stroke="#e8ce40" stroke-width="0.8" fill="none" stroke-linecap="round" stroke-linejoin="round"/><circle cx="29" cy="36" r="4" fill="#fff"/><circle cx="27.5" cy="32.5" r="1.6" fill="none" stroke="#e8ce40" stroke-width=".7"/><path d="M13 58V43a4 4 0 0 1 4 -4H41a4 4 0 0 1 4 4V58z" fill="#fff"/><path d="M19 40V52M39 40V52M13 52Q19 54 19 52M45 52Q39 54 39 52M24 39.500Q29 44 34 39.5" stroke="#e8ce40" stroke-width="0.7" fill="none" stroke-linecap="round" stroke-linejoin="round"/><text x="29" y="49.5" font-family="Liberation Sans,sans-serif" font-size="2.8" font-weight="bold" text-anchor="middle" fill="#e8ce40">ORE</text><text x="29" y="53.5" font-family="Liberation Sans,sans-serif" font-size="2.8" font-weight="bold" text-anchor="middle" fill="#e8ce40">NO</text></svg></svg></div><div class="av " style="left:91px;top:455px"><svg width="58" height="58" viewBox="0 0 58 58"><rect width="58" height="58" rx="3" fill="#fff"/><svg x="2.2" y="2.2" width="53.6" height="53.6" viewBox="2.2 2.2 53.6 53.6"><rect x="2" y="2" width="54" height="54" fill="#c4bce4"/><circle cx="29" cy="21" r="12.2" fill="#fff"/><circle cx="24" cy="22.2" r="1.7" fill="#c4bce4"/><circle cx="34.5" cy="22.2" r="1.7" fill="#c4bce4"/><path d="M24.2 11.2Q29 18.5 40.4 17.7M24.2 11.2Q22.5 16 18.3 19.2" stroke="#c4bce4" stroke-width="0.9" fill="none" stroke-linecap="round" stroke-linejoin="round"/><path d="M12 58V41.3a5 5 0 0 1 5 -5H41a5 5 0 0 1 5 5V58z" fill="#fff"/><path d="M24 36.5L29 43L34 36.5z" fill="#c4bce4"/><path d="M24 36.5l2.5 4.5 2.5-2.5 2.5 2.5 2.5-4.5" stroke="#fff" stroke-width="0.9" fill="none" stroke-linecap="round" stroke-linejoin="round"/><path d="M27.8 40h2.4l1.3 18h-5z" fill="#c4bce4"/><path d="M22 44.5V58M36 44.5V58" stroke="#c4bce4" stroke-width="1.2" fill="none"/></svg></svg></div><div class="av " style="left:155px;top:455px"><svg width="58" height="58" viewBox="0 0 58 58"><rect width="58" height="58" rx="3" fill="#fff"/><svg x="2.2" y="2.2" width="53.6" height="53.6" viewBox="2.2 2.2 53.6 53.6"><rect x="2" y="2" width="54" height="54" fill="#75c475"/><path d="M12.2 31Q10 9 29 9Q48 9 45.8 31L47.5 33.500Q44 37 40 35.500L38 36.500H20L18 35.500Q14 37 10.5 33.500z" fill="#fff"/><path d="M16.5 26Q16 13 29 13.300Q42 13 41.5 26Q41.5 32 37 33.500l-1.5-2-1.5 2-1.5-2-1.5 2-1.5-2-1.5 2-1.5-2-1.5 2-1.5-2-1.5 2Q16.5 32 16.5 26z" fill="#75c475"/><circle cx="22.3" cy="17" r="4.5" fill="#fff"/><circle cx="35.9" cy="17" r="4.5" fill="#fff"/><circle cx="22.8" cy="17" r="1.8" fill="#75c475"/><circle cx="35.4" cy="17" r="1.8" fill="#75c475"/><path d="M27.5 6.500h3v3h-3z" fill="#fff"/><path d="M14.5 58V41.5a3 3 0 0 1 3 -3H40.5a3 3 0 0 1 3 3V58z" fill="#fff"/><path d="M23.5 39H34.500V50Q34.5 52 32.5 52H25.500Q23.5 52 23.5 50z" fill="#75c475"/><path d="M29 41.500l1.3 3h3.200l-2.6 2 1 3.2-2.9-2-2.9 2 1-3.2-2.6-2h3.200z" fill="#fff"/><path d="M20.5 46V58M37.5 46V58" stroke="#75c475" stroke-width="1" fill="none"/></svg></svg></div><div class="av " style="left:219px;top:455px"><svg width="58" height="58" viewBox="0 0 58 58"><rect width="58" height="58" rx="3" fill="#fff"/><svg x="2.2" y="2.2" width="53.6" height="53.6" viewBox="2.2 2.2 53.6 53.6"><rect x="2" y="2" width="54" height="54" fill="#e0d62e"/><path d="M19 10L20.5 2.500L27 8.500zM39 10L37.5 2.500L31 8.500z" fill="#fff"/><path d="M29 6Q40 6 42 16L47.8 22.500L43 22L46.5 29L41 27.500L43 34L37.5 31Q34 36 29 36Q24 36 20.5 31L15 34L17 27.500L11.5 29L15 22L10.2 22.500L16 16Q18 6 29 6z" fill="#fff"/><path d="M21.5 4.500L23 9M36.5 4.500L35 9M18.5 25a10.3 10.3 0 0 0 20.6 0M24 12Q27 19 22 26M28 10.500Q31 17 37 21M32 10.500Q36 16 41 19M30 17L35 26M32 17L38 25M20 14L17.5 21M40 14L43 21" stroke="#e0d62e" stroke-width="0.6" fill="none" stroke-linecap="round" stroke-linejoin="round"/><circle cx="23.6" cy="23.3" r="1.2" fill="#e0d62e"/><path d="M10.2 58Q10.5 44 17 40.500L24 37.600H34L41 40.500Q49 44 49.5 58z" fill="#fff"/><path d="M22 39L29 50L36 39M18 41L27 55M40 41L31 55M25 42L29 47L33 42M16 47L20 58M42 47L38 58M29 50V58" stroke="#e0d62e" stroke-width="0.6" fill="none" stroke-linecap="round" stroke-linejoin="round"/></svg></svg></div><div class="av " style="left:283px;top:455px"><svg width="58" height="58" viewBox="0 0 58 58"><rect width="58" height="58" rx="3" fill="#fff"/><svg x="2.2" y="2.2" width="53.6" height="53.6" viewBox="2.2 2.2 53.6 53.6"><rect x="2" y="2" width="54" height="54" fill="#c3955d"/><circle cx="29" cy="24" r="11.5" fill="#fff"/><path d="M16.5 21Q14.5 17 17.5 14Q18 5 29 5Q40 5 40.5 14Q43.5 17 41.5 21Q29 18.5 16.5 21z" fill="#c3955d" stroke="#fff" stroke-width=".9"/><path d="M17.5 14Q29 10.5 40.5 14" stroke="#fff" stroke-width="0.7" fill="none" stroke-linecap="round" stroke-linejoin="round"/><path d="M20 10.500Q29 7 38 10.5" stroke="#fff" stroke-width="2.2" stroke-dasharray="1.3 .9" fill="none"/><path d="M17.5 17.500Q29 14 40.5 17.5" stroke="#fff" stroke-width="2.6" stroke-dasharray="1.4 .8" fill="none"/><circle cx="24" cy="25.5" r="1.1" fill="#c3955d"/><circle cx="34.5" cy="25.5" r="1.1" fill="#c3955d"/><path d="M24 33l2.5 2 2.5-1 2.5 1 2.5-2v4H24z" fill="#c3955d"/><path d="M13.5 58V43Q13.5 39.5 17 39.500H20.500V38H37.500V39.500H41Q44.5 39.5 44.5 43V58" fill="none" stroke="#fff" stroke-width=".8"/><path d="M19.5 58V44a3 3 0 0 1 3 -3H35.5a3 3 0 0 1 3 3V58z" fill="#fff"/><path d="M25 42.500H33M27 44.500H31" stroke="#c3955d" stroke-width="0.6" fill="none" stroke-linecap="round" stroke-linejoin="round"/><ellipse cx="29" cy="49.5" rx="5" ry="4.2" fill="#c3955d"/><ellipse cx="29" cy="49.5" rx="4" ry="3.3" fill="#fff"/><circle cx="27.2" cy="48.5" r="0.9" fill="#c3955d"/><circle cx="30.8" cy="48.5" r="0.9" fill="#c3955d"/><path d="M25 53.500Q29 56 33 53.500M26.5 53.500V56M29 54V56.500M31.5 53.500V56" stroke="#c3955d" stroke-width="0.5" fill="none" stroke-linecap="round" stroke-linejoin="round"/></svg></svg></div><div class="av " style="left:347px;top:455px"><svg width="58" height="58" viewBox="0 0 58 58"><rect width="58" height="58" rx="3" fill="#fff"/><svg x="2.2" y="2.2" width="53.6" height="53.6" viewBox="2.2 2.2 53.6 53.6"><rect x="2" y="2" width="54" height="54" fill="#e02b47"/><path d="M21 8h3v2h3V8h5v2h3V8h3v2h2v4h2v4h-2v4h2v4h-2v3h-2V41H20V29h-2v-3h-2v-4h2v-4h-2v-4h2v-4h3zM19 47H41v3h-2.500v2.500H21.500V50H19z" fill="#fff"/><path d="M22 20.500h5.500v1.300H22zM31.5 20.500H37v1.300h-5.500z" fill="#e02b47"/></svg></svg></div><div class="av " style="left:411px;top:455px"><svg width="58" height="58" viewBox="0 0 58 58"><rect width="58" height="58" rx="3" fill="#fff"/><svg x="2.2" y="2.2" width="53.6" height="53.6" viewBox="2.2 2.2 53.6 53.6"><rect x="2" y="2" width="54" height="54" fill="#c8a05c"/><circle cx="29" cy="25" r="12.5" fill="#fff"/><path d="M14 28Q11 24 12 21L15 22zM44 28Q47 24 46 21L43 22z" fill="#fff"/><path d="M15.5 20Q14 4.5 29 4.500Q44 4.5 42.5 20Q29 15.5 15.5 20z" fill="#fff" stroke="#c8a05c" stroke-width=".6"/><path d="M11.5 21.500Q29 13.5 46.5 21.500Q47.5 24 45 23.500Q29 17.5 13 23.500Q10.5 24 11.5 21.500z" fill="#fff" stroke="#c8a05c" stroke-width=".6"/><path d="M28 2.500h2v2.500h-2z" fill="#fff"/><path d="M25.5 9v3.500Q29 15 32.5 12.500V9M29 8.500V15M21 7Q19 12 19.5 17M37 7Q39 12 38.5 17" stroke="#c8a05c" stroke-width="0.6" fill="none" stroke-linecap="round" stroke-linejoin="round"/><circle cx="23.5" cy="26.5" r="1.1" fill="#c8a05c"/><circle cx="34.5" cy="26.5" r="1.1" fill="#c8a05c"/><path d="M21 24.500l3.5-1M37 24.500l-3.5-1M26.5 32.500Q29 33.5 31.5 32.5" stroke="#c8a05c" stroke-width="0.5" fill="none" stroke-linecap="round" stroke-linejoin="round"/><path d="M12.5 58V45a5 5 0 0 1 5 -5H40.5a5 5 0 0 1 5 5V58z" fill="#fff"/><path d="M22.5 40.500Q29 47 35.5 40.500M24 40.500Q29 45.5 34 40.500M29 45.500V58M19.5 46V58M38.5 46V58M12.5 52H19.500M12.5 53.500H19.500M38.5 52H45.500M38.5 53.500H45.5" stroke="#c8a05c" stroke-width="0.6" fill="none" stroke-linecap="round" stroke-linejoin="round"/><circle cx="30.3" cy="48" r=".6" fill="#c8a05c"/><circle cx="30.3" cy="51.5" r=".6" fill="#c8a05c"/><circle cx="30.3" cy="55" r=".6" fill="#c8a05c"/></svg></svg></div><div class="av " style="left:475px;top:455px"><svg width="58" height="58" viewBox="0 0 58 58"><rect width="58" height="58" rx="3" fill="#fff"/><svg x="2.2" y="2.2" width="53.6" height="53.6" viewBox="2.2 2.2 53.6 53.6"><rect x="2" y="2" width="54" height="54" fill="#a65fab"/><path d="M19.5 5.500H39Q41.5 12 42.5 21.500H15.500Q16.5 12 19.5 5.500z" fill="#fff"/><path d="M16 21H42L44 30L40 28L38 33Q34 36.5 29 36.500Q24 36.5 20 33L18 28L14 30z" fill="#fff"/><path d="M19 24a10.5 10.5 0 0 0 20.5 2M29 21L26 28M29 21L33 30M24 21L20.5 29M34 21L38 28" stroke="#a65fab" stroke-width="0.6" fill="none" stroke-linecap="round" stroke-linejoin="round"/><circle cx="24" cy="26" r="1" fill="#a65fab"/><circle cx="33.5" cy="26" r="1" fill="#a65fab"/><path d="M36 10.500q1.2-1.5 2 0 .8-1.5 2 0 0 1.5-2 3-2-1.5-2-3z" fill="#a65fab"/><path d="M13.5 58V43a4 4 0 0 1 4 -4H40.5a4 4 0 0 1 4 4V58z" fill="#fff"/><path d="M25 38l2 3.5 2-1.5 2 1.5 2-3.5-2-.8h-4z" fill="#fff"/><path d="M25 38.500l2 3.5 2-1.8 2 1.8 2-3.5" stroke="#a65fab" stroke-width="0.5" fill="none" stroke-linecap="round" stroke-linejoin="round"/><path d="M28.3 41.500h1.400l.8 11.5-1.5 2.5-1.5-2.500z" fill="#a65fab"/><path d="M20.5 46V58M37.5 46V58" stroke="#a65fab" stroke-width="1" fill="none"/></svg></svg></div><div class="av " style="left:539px;top:455px"><svg width="58" height="58" viewBox="0 0 58 58"><rect width="58" height="58" rx="3" fill="#fff"/><svg x="2.2" y="2.2" width="53.6" height="53.6" viewBox="2.2 2.2 53.6 53.6"><rect x="2" y="2" width="54" height="54" fill="#73733a"/><circle cx="29" cy="21.5" r="12" fill="#fff"/><path d="M18.5 16Q21 9 29 9Q37 9 39.5 16z" fill="#fff" stroke="#73733a" stroke-width=".6"/><path d="M20.5 14.500H37.500M22 12.500H36M24 11l1.5 3.500M27.5 10.200l1 4M31 10.200l-.5 4M34 11l-1.5 3.5" stroke="#73733a" stroke-width="0.5" fill="none" stroke-linecap="round" stroke-linejoin="round"/><circle cx="24" cy="22.5" r="1.7" fill="#73733a"/><circle cx="34.5" cy="22.5" r="1.7" fill="#73733a"/><path d="M12.5 58V41.5a4 4 0 0 1 4 -4H42a4 4 0 0 1 4 4V58z" fill="#fff"/><path d="M19.5 45.5V58M39 45.5V58" stroke="#73733a" stroke-width="1.2" fill="none"/><path d="M12.5 50.500H19.500M39 50.500H46" stroke="#73733a" stroke-width="1" fill="none" stroke-linecap="round" stroke-linejoin="round"/></svg></svg></div><div class="av " style="left:603px;top:455px"><svg width="58" height="58" viewBox="0 0 58 58"><rect width="58" height="58" rx="3" fill="#fff"/><svg x="2.2" y="2.2" width="53.6" height="53.6" viewBox="2.2 2.2 53.6 53.6"><rect x="2" y="2" width="54" height="54" fill="#8e7b68"/><path d="M27 6Q25 3.5 27.5 2.500Q29.5 3 28.5 5Q40 4 43 14L47 19L43 19L46 25L42 24L43 30L39 29Q37 35 29 35.500Q21 35 19 30Q14 28 15 20Q15 8 27 6z" fill="#fff"/><path d="M18.5 24a10.5 10 0 0 0 21 0M22 12L20 22M25 10.500L23 21M28 10L27.5 19M31 10L33 20M34 11L38 21M22 14L30 24M24 13L32 22" stroke="#8e7b68" stroke-width="0.5" fill="none" stroke-linecap="round" stroke-linejoin="round"/><path d="M19.5 25.500h8v3.500h-7zM29.5 25.500h8l-1 3.500h-7zM27.5 26.500h2" stroke="#8e7b68" stroke-width="0.6" fill="none" stroke-linecap="round" stroke-linejoin="round"/><path d="M24 36.500h10v2.500H24z" fill="#fff"/><path d="M24 37.500h10" stroke="#8e7b68" stroke-width="0.5" fill="none" stroke-linecap="round" stroke-linejoin="round"/><path d="M10 58L13.5 44Q15 40 20 39.500H38Q43 40 44.5 44L48 58z" fill="#fff"/><path d="M23 39.500L37 54M35 39.500L19 56M25.5 39.500L39 53M33 39.500L21.5 52M18 45V58M40 45V58" stroke="#8e7b68" stroke-width="0.7" fill="none" stroke-linecap="round" stroke-linejoin="round"/><path d="M14 48l2 2M16 48l-2 2M42 46l2 2M44 46l-2 2M22 54l2 2M24 54l-2 2M35 55l2 2M37 55l-2 2" stroke="#8e7b68" stroke-width="0.4" fill="none" stroke-linecap="round" stroke-linejoin="round"/></svg></svg></div><div class="av " style="left:667px;top:455px"><svg width="58" height="58" viewBox="0 0 58 58"><rect width="58" height="58" rx="3" fill="#fff"/><svg x="2.2" y="2.2" width="53.6" height="53.6" viewBox="2.2 2.2 53.6 53.6"><rect x="2" y="2" width="54" height="54" fill="#ffc267"/><path d="M27 11Q20 2 11.5 5.500Q14 9 13 12.500Q20 14 27 12zM31 11Q38 2 46.5 5.500Q44 9 45 12.500Q38 14 31 12z" fill="#fff"/><circle cx="29" cy="11.5" r="2.6" fill="#fff"/><path d="M29 11Q43 11 43.5 25L47 35L42 32L42.5 37L38 34.500H20L15.5 37L16 32L11 35L14.5 25Q15 11 29 11z" fill="#fff"/><path d="M18.5 26a10.5 10.5 0 0 0 21 0M24 13Q26 20 19 25M24 13Q30 22 37 22M40 21L42 33M17 24L15 33" stroke="#ffc267" stroke-width="0.6" fill="none" stroke-linecap="round" stroke-linejoin="round"/><path d="M17 20l3 4M18.5 19l3 4M34 19l2.5 3.500l1-3 2 3" stroke="#ffc267" stroke-width="0.7" fill="none" stroke-linecap="round" stroke-linejoin="round"/><circle cx="24.5" cy="27.5" r="1.1" fill="#ffc267"/><circle cx="35" cy="27.5" r="1.1" fill="#ffc267"/><path d="M14 58V43a4 4 0 0 1 4 -4H40a4 4 0 0 1 4 4V58z" fill="#fff"/><path d="M15 40.500H43L36 46L29 42L22 46z" fill="#ffc267"/><path d="M22 46L29 42L36 46L31 52L29 46L27 52zM20 46V58M38 46V58" stroke="#fff" stroke-width="0.7" fill="none" stroke-linecap="round" stroke-linejoin="round"/><path d="M20.5 47V58M37.5 47V58" stroke="#ffc267" stroke-width="0.6" fill="none" stroke-linecap="round" stroke-linejoin="round"/></svg></svg></div><div class="av " style="left:731px;top:455px"><svg width="58" height="58" viewBox="0 0 58 58"><rect width="58" height="58" rx="3" fill="#fff"/><svg x="2.2" y="2.2" width="53.6" height="53.6" viewBox="2.2 2.2 53.6 53.6"><rect x="2" y="2" width="54" height="54" fill="#dbc863"/><path d="M17.5 16L19.5 3.500L27 10.500H31L38.5 3.500L40.5 16z" fill="#fff"/><path d="M21 6.500L22 12M37 6.500L36 12" stroke="#dbc863" stroke-width="0.5" fill="none" stroke-linecap="round" stroke-linejoin="round"/><circle cx="29" cy="22.5" r="12.8" fill="#fff"/><path d="M18.5 21Q29 24.5 39.5 21Q42 27 38 32Q29 36 20 32Q16 27 18.5 21z" fill="#dbc863"/><path d="M34 15l3 3M35.5 14l3 3M34 18l3-3" stroke="#dbc863" stroke-width="0.5" fill="none" stroke-linecap="round" stroke-linejoin="round"/><path d="M13.5 58V42a3 3 0 0 1 3 -3H41.5a3 3 0 0 1 3 3V58z" fill="#fff"/><path d="M20 47V58M38 47V58" stroke="#dbc863" stroke-width="1" fill="none"/><path d="M29 39.500V58" stroke="#dbc863" stroke-width="0.6" fill="none" stroke-linecap="round" stroke-linejoin="round"/></svg></svg></div><div class="av " style="left:251px;top:519px"><svg width="58" height="58" viewBox="0 0 58 58"><rect width="58" height="58" rx="3" fill="#fff"/><svg x="2.2" y="2.2" width="53.6" height="53.6" viewBox="2.2 2.2 53.6 53.6"><rect x="2" y="2" width="54" height="54" fill="#643713"/><path d="M16 12L19 19Q21 11 29 11Q37 11 39 19L42 12L41.5 24Q41 30 36 33L33 38H25L22 33Q17 30 16.5 24z" fill="#fffaf4"/><path d="M23 12Q26 15 25 19M26.5 11.500Q29 15 28.5 19M30 11.500Q32 15 32 19M33.5 12Q36 15 35.5 19" stroke="#643713" stroke-width="0.5" fill="none" stroke-linecap="round" stroke-linejoin="round"/><ellipse cx="23.8" cy="23.5" rx="3.5" ry="2.3" fill="#643713"/><ellipse cx="34.2" cy="23.5" rx="3.5" ry="2.3" fill="#643713"/><path d="M24 28L29 26L34 28L32.5 34H25.500zM29 26V34M26 31H32" stroke="#643713" stroke-width="0.6" fill="none" stroke-linecap="round" stroke-linejoin="round"/><circle cx="29" cy="38" r="3.5" fill="#fffaf4" stroke="#643713" stroke-width=".6"/><path d="M13.5 58V42a4 4 0 0 1 4 -4H40.5a4 4 0 0 1 4 4V58z" fill="#fffaf4"/><path d="M24 39.500L29 50L34 39.500M26.5 42L29 47L31.5 42M20.5 46V58M37.5 46V58" stroke="#643713" stroke-width="0.6" fill="none" stroke-linecap="round" stroke-linejoin="round"/><path d="M28.3 42h1.400l.6 6-1.3 2-1.3-2z" fill="#643713"/><path d="M35 53v3M33.5 54.500h3" stroke="#643713" stroke-width="0.5" fill="none" stroke-linecap="round" stroke-linejoin="round"/></svg></svg></div><div class="av " style="left:315px;top:519px"><svg width="58" height="58" viewBox="0 0 58 58"><rect width="58" height="58" rx="3" fill="#fff"/><svg x="2.2" y="2.2" width="53.6" height="53.6" viewBox="2.2 2.2 53.6 53.6"><rect x="2" y="2" width="54" height="54" fill="#25254a"/><path d="M29.3 4.600Q41 4.5 43.5 15L45.8 22L43 21L43.5 26L40.5 24.500Q40.5 33 29.3 37.500Q18.5 33 18.5 24.500L15.5 26L16 21L13.5 22L15.5 15Q17.5 4.5 29.3 4.600z" fill="#fff"/><path d="M19.5 25a9.8 10.5 0 0 0 19.6 2M22 9Q24 15 20.5 21M26 7Q28 13 25 19M30 7Q31 14 34.5 20M34 8Q37 13 38.5 20M28 11L30.5 20M17 14L15.5 20M41.5 14L43.5 20" stroke="#25254a" stroke-width="0.5" fill="none" stroke-linecap="round" stroke-linejoin="round"/><path d="M21.8 23.500q2.5 1.2 5 0M31.8 23.500q2.5 1.2 5 0" stroke="#25254a" stroke-width="0.8" fill="none" stroke-linecap="round" stroke-linejoin="round"/><path d="M25.5 35.500h7.500v3h-7.500z" fill="#fff"/><path d="M13.7 58V42.4a5 5 0 0 1 5 -5H40.5a5 5 0 0 1 5 5V58z" fill="#fff"/><path d="M19.7 38.200H39.400V58H19.700z" fill="#25254a"/><path d="M22.8 36.900H35.900L29.3 49.500z" fill="#fff"/><path d="M22.8 37.500L29.3 50L35.9 37.5" stroke="#fff" stroke-width="0.5" fill="none" stroke-linecap="round" stroke-linejoin="round"/><path d="M26.5 39.500l2.8 1.3 2.8-1.300v2.800l-2.8-1.3-2.8 1.300zM29.3 42.500V49" stroke="#25254a" stroke-width="0.6" fill="none" stroke-linecap="round" stroke-linejoin="round"/></svg></svg></div><div class="av " style="left:379px;top:519px"><svg width="58" height="58" viewBox="0 0 58 58"><rect width="58" height="58" rx="3" fill="#fff"/><svg x="2.2" y="2.2" width="53.6" height="53.6" viewBox="2.2 2.2 53.6 53.6"><rect x="2" y="2" width="54" height="54" fill="#4b63b3"/><path d="M21 9L22.5 2.500L28 7M37.5 9L36.5 2.500L31 7" stroke="#fff" stroke-width="0.7" fill="none" stroke-linecap="round" stroke-linejoin="round"/><path d="M29 5Q38 5 40 14L43.5 17.500L41 18.500L44 24L40.5 23.500L41 29L38 27.500Q37 33.5 29 35Q21 33.5 20 27.500L14.5 31L16.5 24.500L9.8 21.500L15.5 19L11.5 13.500L17.5 14.500Q20 5 29 5z" fill="#fff"/><path d="M22 12Q24 20 21 28M26 10Q27 18 25 26M30 10Q30 18 33 25M34 11Q36 17 37 24M28 14L29.5 26" stroke="#4b63b3" stroke-width="0.5" fill="none" stroke-linecap="round" stroke-linejoin="round"/><circle cx="34.8" cy="24.5" r="1" fill="#4b63b3"/><path d="M40 26.500Q44 19 56 17" stroke="#fff" stroke-width="0.6" fill="none" stroke-linecap="round" stroke-linejoin="round"/><path d="M24.5 37.300Q29 39.5 33.5 37.3" stroke="#fff" stroke-width="1.4" fill="none" stroke-linecap="round" stroke-linejoin="round"/><path d="M13.3 58V43.2a5 5 0 0 1 5 -5H40.1a5 5 0 0 1 5 5V58z" fill="#fff"/><path d="M18.9 45V58M39.1 45V58" stroke="#aab8e8" stroke-width="0.7" fill="none" stroke-linecap="round" stroke-linejoin="round"/></svg></svg></div><div class="av " style="left:443px;top:519px"><svg width="58" height="58" viewBox="0 0 58 58"><rect width="58" height="58" rx="3" fill="#fff"/><svg x="2.2" y="2.2" width="53.6" height="53.6" viewBox="2.2 2.2 53.6 53.6"><rect x="2" y="2" width="54" height="54" fill="#6e8d8d"/><rect x="19" y="12.2" width="21.2" height="21.7" rx="1.8" fill="#fff"/><path d="M28.7 8h1.300v4.500h-1.300z" fill="#fff"/><circle cx="29.3" cy="7.1" r="2.4" fill="#fff"/><path d="M18.5 7.500l1.5-1.7 1.8 2 1.8-2M34.5 7.500l1.8-1.7 1.8 2 1.8-2" stroke="#fff" stroke-width="0.7" fill="none" stroke-linecap="round" stroke-linejoin="round"/><path d="M21.5 22.200h4.100v2.100h-4.100zM33.2 22.200h4.100v2.100h-4.100zM26.1 29.300h6.500v2.500h-6.500z" fill="#6e8d8d"/><path d="M15 58V39.400Q15 36.4 18 36.400H41.300Q44.3 36.4 44.3 39.400V58z" fill="#fff"/><path d="M19.5 42.400l2-2 2 2-2 2zM26.1 42.400l2-2 2 2-2 2z" fill="#6e8d8d"/><path d="M33.2 42H38.700M33.7 46H38.700M34.2 49.500H38.7" stroke="#6e8d8d" stroke-width="1.3" fill="none" stroke-linecap="round" stroke-linejoin="round"/></svg></svg></div><div class="av " style="left:507px;top:519px"><svg width="58" height="58" viewBox="0 0 58 58"><rect width="58" height="58" rx="3" fill="#fff"/><svg x="2.2" y="2.2" width="53.6" height="53.6" viewBox="2.2 2.2 53.6 53.6"><rect x="2" y="2" width="54" height="54" fill="#75b45b"/><ellipse cx="29" cy="22" rx="9.5" ry="12.5" fill="#fff"/><ellipse cx="29" cy="9" rx="8.5" ry="2.5" fill="none" stroke="#fff" stroke-width="1"/><path d="M19.5 8l-2 1.500M38.5 8l2 1.500M21 11l2 1.500M37 11l-2 1.5" stroke="#fff" stroke-width="0.8" fill="none" stroke-linecap="round" stroke-linejoin="round"/><circle cx="25" cy="21.5" r="1.2" fill="#75b45b"/><circle cx="33" cy="21.5" r="1.2" fill="#75b45b"/><path d="M23 18.500h4M31 18.500h4M27 27.500h4M27.5 30h3" stroke="#75b45b" stroke-width="0.6" fill="none" stroke-linecap="round" stroke-linejoin="round"/><path d="M25.5 34.500h7v5h-7z" fill="#fff"/><path d="M25.5 36H32.500M25.5 37.800H32.5" stroke="#75b45b" stroke-width="0.6" fill="none" stroke-linecap="round" stroke-linejoin="round"/><path d="M14 58V42.5a3 3 0 0 1 3 -3H41a3 3 0 0 1 3 3V58z" fill="#fff"/><path d="M22 58V52a7 7 0 0 1 14 0V58" fill="none" stroke="#75b45b" stroke-width="2.2"/><path d="M24 58V52a5 5 0 0 1 10 0V58" stroke="#fff" stroke-width="0.6" fill="none" stroke-linecap="round" stroke-linejoin="round"/><path d="M19 46V58M39 46V58" stroke="#75b45b" stroke-width="0.8" fill="none"/></svg></svg></div></div>
<div class="abs" style="left:1143px;top:347px;width:6px;height:586px;background:#1a1a1a"><div class="abs" style="left:0;top:68px;width:6px;height:282px;background:#555;border-radius:3px"></div></div>
<div class="abs" style="left:322px;top:959px;line-height:0"><svg class="ic" width="14" height="14" viewBox="0 0 14 14"><circle cx="7" cy="7" r="7" fill="#6a6a6a"/><circle cx="7" cy="3.900" r="1.100" fill="#2a2a2a"/><path d="M5.500 6.200h2.300v3.800h1v1.200H5.300V10h1V7.400h-.8z" fill="#2a2a2a"/></svg></div><div class="t" id="t_scroll" style="left:340.18px;top:960px;font-size:13.5px;color:#686868;letter-spacing:0.253px">Scroll through the avatar gallery above to find one you like</div>
<div class="card" id="right"></div>
<div class="abs" style="left:1216px;top:309px;line-height:0"><svg class="ic" width="15" height="16" viewBox="0 0 15 16"><circle cx="7.5" cy="4.3" r="4.1" fill="#e0e0e0"/><path d="M0 16v-1.500Q0 9.800 4.500 9.800h6Q15 9.800 15 14.500V16z" fill="#e0e0e0"/></svg></div><div class="t" id="t_disp" style="left:1234.66px;top:310px;font-size:15px;color:#e0e0e0;letter-spacing:0.267px;font-weight:bold">Display Name</div>
<div class="abs" style="left:1217px;top:337px;width:381px;height:48px;background:#333;border:1px solid #8a8a8a;border-radius:8px;box-shadow:0 0 0 3px #424242,inset 0 0 0 .5px rgba(138,138,138,.35)"></div>
<div class="t" id="t_anon" style="left:1233.11px;top:352px;font-size:20.4px;color:#fff;letter-spacing:0.050px">anon</div>
<div class="abs" style="left:1278px;top:347px;width:1px;height:27px;background:#fff"></div>
<div class="t" id="t_help" style="left:1217.34px;top:394px;font-size:13.4px;color:#606060;letter-spacing:0.159px">This is how others will see you in chat</div>
<div class="abs" style="left:1216px;top:439px;line-height:0"><svg class="ic" width="17" height="14" viewBox="0 0 17 14"><rect x="0" y="0" width="17" height="14" rx="2" fill="#e0e0e0"/><path d="M2.200 11.500l3.800-5 2.500 3 2.500-3.800 4 5.800z" fill="#2a2a2a"/><circle cx="4.300" cy="3.800" r="1.500" fill="#2a2a2a"/></svg></div><div class="t" id="t_sel" style="left:1236.86px;top:439px;font-size:15.2px;color:#e0e0e0;letter-spacing:-0.035px;font-weight:bold">Selected Avatar &amp; Chat Color</div>
<div class="abs" style="left:1217px;top:466px;width:107px;height:125px;background:#333;border:1px solid #444;border-radius:8px;overflow:hidden"><div class="abs" style="left:22px;top:17px;width:60px;height:60px;border:2px solid #007bff;border-radius:4px;overflow:hidden"><div style="margin:-1px"><svg width="58" height="58" viewBox="0 0 58 58"><rect width="58" height="58" rx="3" fill="#fff"/><svg x="2.2" y="2.2" width="53.6" height="53.6" viewBox="2.2 2.2 53.6 53.6"><rect x="2" y="2" width="54" height="54" fill="#91c0ea"/><circle cx="29" cy="21" r="12.2" fill="#fff"/><circle cx="24" cy="22.2" r="1.7" fill="#91c0ea"/><circle cx="34.5" cy="22.2" r="1.7" fill="#91c0ea"/><path d="M24.2 11.2Q29 18.5 40.4 17.7M24.2 11.2Q22.5 16 18.3 19.2" stroke="#91c0ea" stroke-width="0.9" fill="none" stroke-linecap="round" stroke-linejoin="round"/><path d="M12 58V41.3a5 5 0 0 1 5 -5H41a5 5 0 0 1 5 5V58z" fill="#fff"/><path d="M19 44.5V58M39.5 44.5V58" stroke="#91c0ea" stroke-width="1.3" fill="none"/><path d="M33 46H39.5" stroke="#91c0ea" stroke-width="0.9" fill="none" stroke-linecap="round" stroke-linejoin="round"/></svg></svg></div></div><div class="t" id="t_av1" style="left:32.80px;top:92px;font-size:13.4px;color:#666;letter-spacing:0.156px">Avatar</div><div class="t" id="t_av2" style="left:27.09px;top:112px;font-size:13.4px;color:#666;letter-spacing:0.150px">selected</div></div>
<div class="abs" style="left:1348px;top:466px;width:250px;height:125px;background:#333;border:1px solid #444;border-radius:8px"></div>
<div class="abs" style="left:1374px;top:489px;width:200px;height:80px;border:3px solid #fff;border-radius:8px;background:linear-gradient(to bottom,#7cc3f8 0%,#5d9fe3 24%,#5a9eec 49.5%,#3a8ee6 50.5%,#5fbcf0 80%,#78e6fb 100%)"></div>
<button type="button" style="left:1217px;top:607px;width:381px;height:44px;background:#404040;border:1px solid #5c5c5c;border-radius:6px"></button>
<div class="abs" style="left:1320.75px;top:622px;line-height:0"><svg class="ic" width="18" height="14" viewBox="0 0 18 14"><rect x="4.11" y="0.24" width="1.78" height="8.71" rx="0.40" fill="#e0e0e0" transform="rotate(0 5 4.6)"/><rect x="4.11" y="0.24" width="1.78" height="8.71" rx="0.40" fill="#e0e0e0" transform="rotate(45 5 4.6)"/><rect x="4.11" y="0.24" width="1.78" height="8.71" rx="0.40" fill="#e0e0e0" transform="rotate(90 5 4.6)"/><rect x="4.11" y="0.24" width="1.78" height="8.71" rx="0.40" fill="#e0e0e0" transform="rotate(135 5 4.6)"/><circle cx="5" cy="4.6" r="3.3" fill="#e0e0e0"/><circle cx="5" cy="4.6" r="1.39" fill="#404040"/><rect x="11.83" y="4.05" width="1.94" height="9.50" rx="0.43" fill="#e0e0e0" transform="rotate(0 12.8 8.8)"/><rect x="11.83" y="4.05" width="1.94" height="9.50" rx="0.43" fill="#e0e0e0" transform="rotate(45 12.8 8.8)"/><rect x="11.83" y="4.05" width="1.94" height="9.50" rx="0.43" fill="#e0e0e0" transform="rotate(90 12.8 8.8)"/><rect x="11.83" y="4.05" width="1.94" height="9.50" rx="0.43" fill="#e0e0e0" transform="rotate(135 12.8 8.8)"/><circle cx="12.8" cy="8.8" r="3.6" fill="#e0e0e0"/><circle cx="12.8" cy="8.8" r="1.51" fill="#404040"/></svg></div><div class="t" id="t_cust" style="left:1343.07px;top:623px;font-size:13.9px;color:#e0e0e0;letter-spacing:-0.165px;font-weight:bold">Customize Appearance</div>
<button type="button" style="left:1217px;top:675px;width:381px;height:56px;background:#28a745;border-radius:8px"></button>
<div class="abs" style="left:1334px;top:694.5px;line-height:0"><svg class="ic" width="21" height="18" viewBox="0 0 21 18"><path d="M0.800 6.300H8V2.600Q8 1.500 8.900 2.200L15.800 8.200Q16.600 9 15.800 9.800L8.900 15.800Q8 16.500 8 15.400V11.700H0.800Q0 11.700 0 10.900V7.100Q0 6.300 0.800 6.300z" fill="#fff"/><path d="M14 1.200H17.200Q19.900 1.200 19.900 3.900V14.100Q19.900 16.800 17.200 16.800H14" stroke="#fff" stroke-width="2.300" fill="none" stroke-linecap="round"/></svg></div><div class="t" id="t_enter" style="left:1359.53px;top:696px;font-size:18.7px;color:#fff;letter-spacing:0.066px;font-weight:bold">Enter Lounge</div>
<div class="abs" style="left:1217px;top:755px;width:381px;height:124px;background:#2a2a2a;border:1px solid #3c3c3c;border-radius:8px"></div>
<div class="t" id="t_already" style="left:1317.20px;top:781px;font-size:15.4px;color:#e0e0e0;letter-spacing:0.100px;-webkit-text-stroke:.15px #e0e0e0">Already have an account?</div>
<button type="button" style="left:1238px;top:816px;width:156px;height:42px;border:1px solid #555;border-radius:6px"></button>
<div class="abs" style="left:1254.75px;top:829px;line-height:0"><svg class="ic" width="14.6" height="16" viewBox="0 0 15 16"><circle cx="7.5" cy="4.3" r="4.1" fill="#007bff"/><path d="M0 16v-1.500Q0 9.800 4.500 9.800h6Q15 9.800 15 14.500V16z" fill="#007bff"/></svg></div><div class="t" id="t_member" style="left:1273.17px;top:830px;font-size:15.8px;color:#007bff;letter-spacing:0.321px">Member Login</div>
<button type="button" style="left:1410px;top:816px;width:167px;height:42px;border:1px solid #555;border-radius:6px"></button>
<div class="abs" style="left:1426.5px;top:829px;line-height:0"><svg class="ic" width="20.6" height="16" viewBox="0 0 20 16"><circle cx="7.2" cy="4.4" r="4.4" fill="#007bff"/><path d="M0 16v-1.2Q0 10.400 4.400 10.400h5.800Q14.800 10.400 14.800 14.800V16z" fill="#007bff"/><path d="M16.800 2.900v7.600M12.900 6.700h7.800" stroke="#007bff" stroke-width="2.100" fill="none"/></svg></div><div class="t" id="t_create" style="left:1450.86px;top:830px;font-size:15.8px;color:#007bff;letter-spacing:-0.055px">Create Account</div>
<div class="t" id="t_f1a" style="left:1222.95px;top:910px;font-size:13.4px;color:#5e5e5e;letter-spacing:0.222px">By joining as a guest, you agree to our</div><div class="t" id="t_f1b" style="left:1463.99px;top:910px;font-size:13.4px;color:#fff;letter-spacing:0.045px;text-decoration:underline;-webkit-text-stroke:.25px #fff">Terms of Service</div><div class="t" id="t_f1c" style="left:1567.88px;top:910px;font-size:13.4px;color:#5e5e5e;letter-spacing:0.457px">and</div><div class="t" id="t_f2a" style="left:1320.65px;top:934px;font-size:13.4px;color:#fff;letter-spacing:-0.042px;text-decoration:underline;-webkit-text-stroke:.25px #fff">Privacy Policy</div><div class="t" id="t_f2b" style="left:1403.75px;top:934px;font-size:13.4px;color:#5e5e5e;letter-spacing:0.158px">. ©Lenn, 2025.</div>
</body></html>
